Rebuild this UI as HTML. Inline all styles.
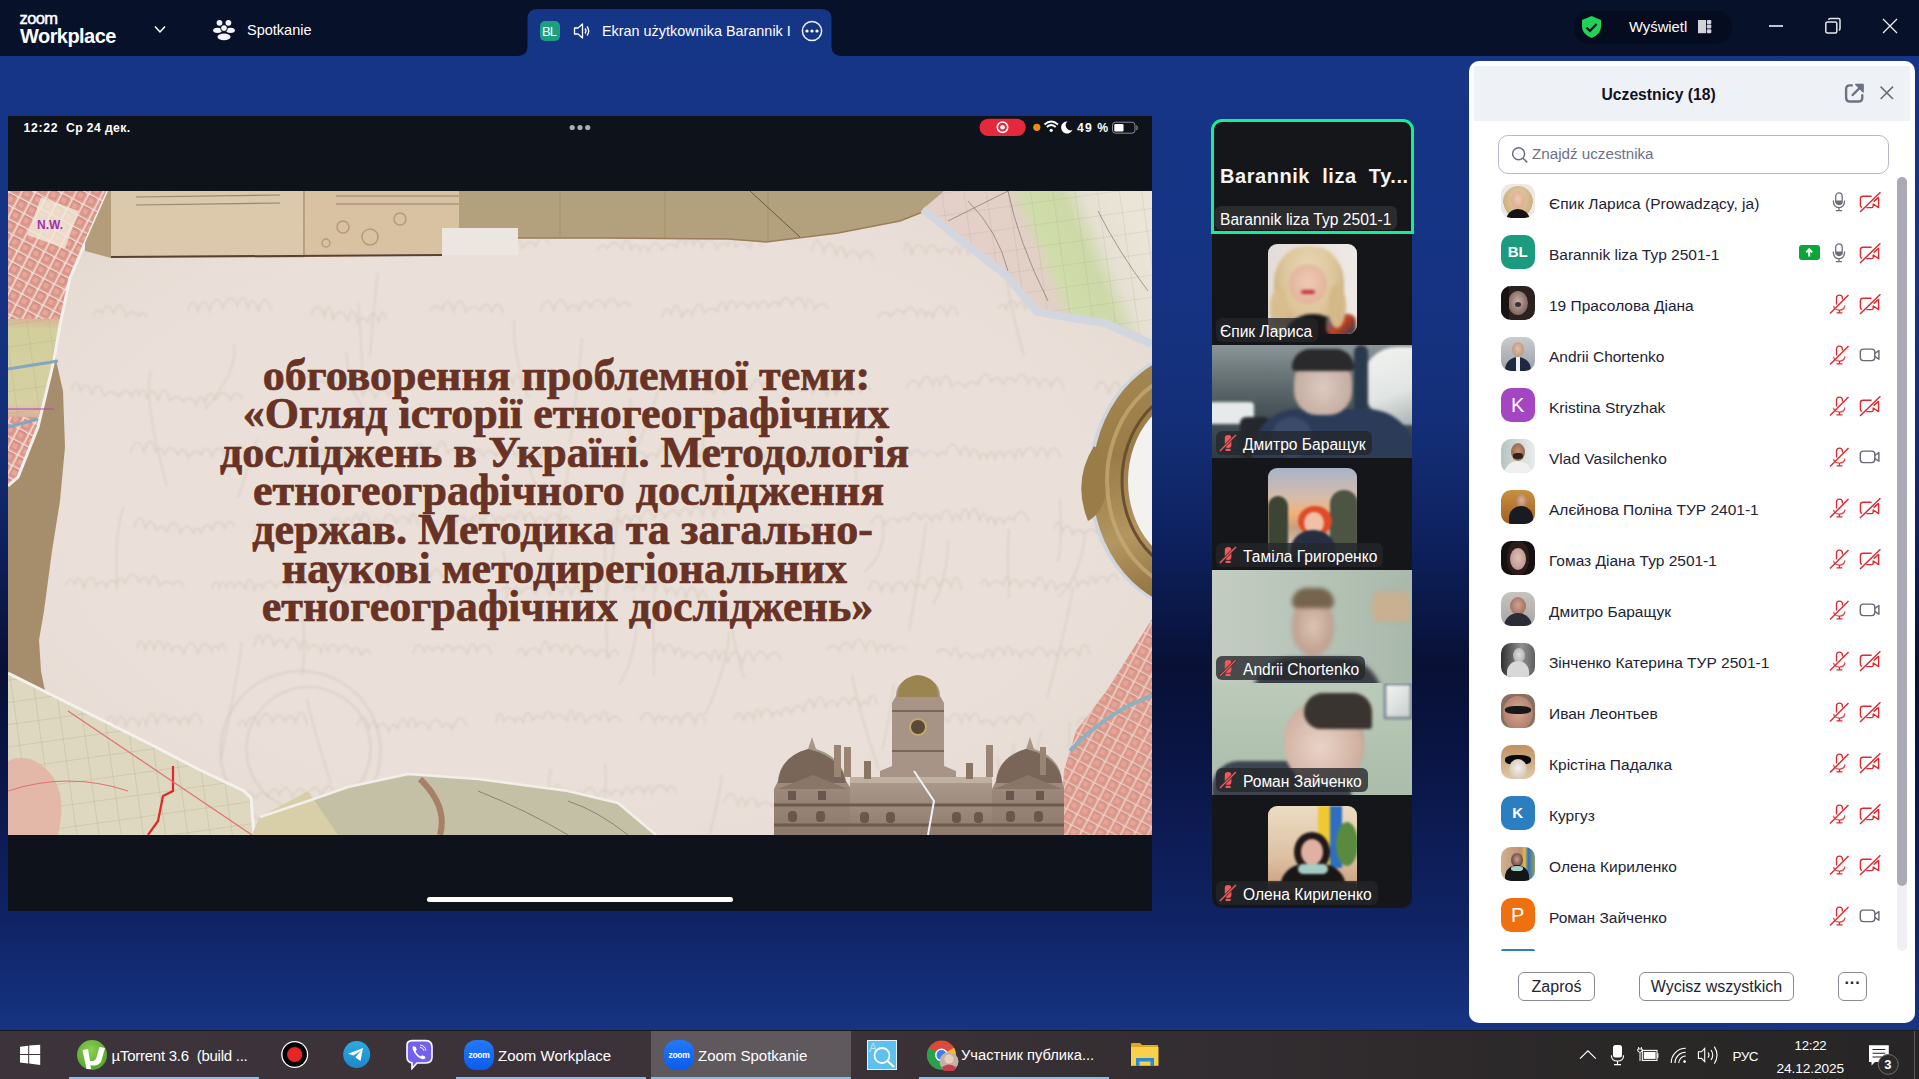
<!DOCTYPE html>
<html><head><meta charset="utf-8">
<style>
*{margin:0;padding:0;box-sizing:border-box}
html,body{width:1919px;height:1079px;overflow:hidden}
body{position:relative;font-family:"Liberation Sans",sans-serif;background:linear-gradient(180deg,#153587 56px,#153382 300px,#142f79 418px,#0e2260 534px,#081035 668px,#0a1545 758px,#0f2262 911px,#163482 1029px)}
.a{position:absolute}
.t{position:absolute;white-space:nowrap;line-height:1}
#top{left:0;top:0;width:1919px;height:56px;background:#07112a}
#screen{left:8px;top:116px;width:1144px;height:795px;background:#0e121b;overflow:hidden}
#strip{left:1212px;top:120px;width:200px;height:788px;background:#141619;border-radius:13px 13px 10px 10px;overflow:visible}
.tile{position:absolute;left:0;width:200px;overflow:hidden}
.lbl{position:absolute;left:4px;height:24px;border-radius:6px;background:rgba(36,38,42,.78);color:#fff;font-size:15.6px;line-height:28px;padding:0 6px;white-space:nowrap}
#panel{left:1469px;top:61px;width:446px;height:962px;background:#fff;border-radius:10px;overflow:hidden}
#phead{left:5px;top:5px;width:436px;height:55px;background:#eef1f5}
.row{position:absolute;left:32px;height:34px;width:380px}
.av{position:absolute;left:0;top:0;width:33.5px;height:33.5px;border-radius:10px;overflow:hidden}
.nm{position:absolute;left:48px;top:3px;line-height:34px;font-size:15.5px;color:#232333;white-space:nowrap}
.btn{position:absolute;top:911px;height:29px;border:1px solid #8a8a96;border-radius:6px;font-size:16px;line-height:27px;text-align:center;color:#232333}
#task{left:0;top:1030px;width:1919px;height:49px;background:linear-gradient(90deg,#3c343a 0%,#3a3237 45%,#322d30 65%,#2a2727 85%,#272525 100%)}
.tt{position:absolute;color:#fff;font-size:15px;white-space:nowrap;line-height:49px;top:0}
.ul{position:absolute;top:46px;height:3px;background:#84bdf0}
</style></head><body>

<!-- TOP BAR -->
<div id="top" class="a">
  <div class="t" style="left:19.5px;top:9.8px;font-size:16.5px;color:#fff;letter-spacing:-0.6px;-webkit-text-stroke:0.5px #fff">zoom</div>
  <div class="t" style="left:20px;top:26px;font-size:20px;font-weight:bold;color:#fff;letter-spacing:-0.55px">Workplace</div>
  <svg class="a" style="left:150px;top:22px" width="20" height="14" viewBox="0 0 20 14"><path d="M5 4.5 L10 10 L15 4.5" stroke="#fff" stroke-width="1.5" fill="none"/></svg>
  <svg class="a" style="left:210px;top:16px" width="30" height="28" viewBox="0 0 30 28">
    <g fill="#f4f5f8"><circle cx="9.5" cy="6.8" r="2.9"/><circle cx="18.4" cy="6.8" r="2.9"/>
    <ellipse cx="7.5" cy="14.3" rx="4.4" ry="2.6"/><ellipse cx="20.5" cy="14.3" rx="4.4" ry="2.6"/>
    <circle cx="14" cy="12.1" r="3.4" stroke="#07112a" stroke-width="1"/>
    <ellipse cx="14" cy="20.9" rx="6.5" ry="3.3"/></g></svg>
  <div class="t" style="left:247px;top:23.3px;font-size:14.5px;color:#fff">Spotkanie</div>
  <!-- tab -->
  <svg class="a" style="left:507px;top:0" width="345" height="56" viewBox="507 0 345 56"><path d="M517 56 Q527.5 56 527.5 45.5 L527.5 19 Q527.5 9 537.5 9 L821.5 9 Q831.5 9 831.5 19 L831.5 45.5 Q831.5 56 842 56 Z" fill="#153587"/></svg>
  <div class="a" style="left:540px;top:21px;width:19.5px;height:19.5px;background:#1c9f7f;border-radius:5px"></div>
  <div class="t" style="left:542px;top:24.5px;font-size:13px;color:#fff;letter-spacing:-0.8px">BL</div>
  <svg class="a" style="left:570px;top:20px" width="24" height="22" viewBox="0 0 24 22"><path d="M4.5 8 L8 8 L12.5 4 L12.5 18 L8 14 L4.5 14 Z" stroke="#fff" stroke-width="1.3" fill="none" stroke-linejoin="round"/><path d="M15 8.5 Q17 11 15 13.5" stroke="#fff" stroke-width="1.3" fill="none"/><path d="M17 6.5 Q20.5 11 17 15.5" stroke="#fff" stroke-width="1.3" fill="none"/></svg>
  <div class="t" style="left:602px;top:23.8px;font-size:14.4px;color:#fff">Ekran użytkownika Barannik I</div>
  <svg class="a" style="left:800px;top:19px" width="24" height="24" viewBox="0 0 24 24"><circle cx="12" cy="12" r="9.6" stroke="#f0f0f5" stroke-width="1.5" fill="none"/><circle cx="7" cy="12" r="1.6" fill="#fff"/><circle cx="12" cy="12" r="1.6" fill="#fff"/><circle cx="17" cy="12" r="1.6" fill="#fff"/></svg>
  <!-- right side -->
  <div class="a" style="left:1574px;top:11px;width:158px;height:33px;background:#050c1f;border-radius:15px"></div>
  <svg class="a" style="left:1580px;top:15px" width="24" height="24" viewBox="0 0 24 24"><path d="M11.7 1 L21 5 L21 12 Q21 19 11.7 23 Q2 19 2 12 L2 5 Z" fill="#22d158"/><path d="M6.5 12.5 L10 16 L16.5 9" stroke="#06102a" stroke-width="2.2" fill="none"/></svg>
  <div class="t" style="left:1629px;top:20px;font-size:14.8px;color:#fff">Wyświetl</div>
  <svg class="a" style="left:1697px;top:19px" width="16" height="16" viewBox="0 0 16 16"><rect x="1" y="1" width="8" height="13.2" fill="#d2d3da"/><rect x="9.8" y="1" width="4.5" height="4" rx="1" fill="#d2d3da"/><rect x="9.8" y="5.6" width="4.5" height="4" rx="1" fill="#d2d3da"/><rect x="9.8" y="10.2" width="4.5" height="4" rx="1" fill="#d2d3da"/></svg>
  <div class="a" style="left:1769px;top:25px;width:14px;height:2px;background:#c2c5cf"></div>
  <svg class="a" style="left:1822px;top:16px" width="22" height="20" viewBox="0 0 22 20"><rect x="3.8" y="5.9" width="11" height="11" rx="1.5" stroke="#e6e7ec" stroke-width="1.5" fill="#07112a"/><path d="M6.6 3.8 Q6.8 2.4 8.4 2.4 L16.6 2.4 Q18 2.4 18 4 L18 12.5 Q18 14 16.8 14.3" stroke="#e6e7ec" stroke-width="1.5" fill="none"/></svg>
  <svg class="a" style="left:1880px;top:16px" width="20" height="20" viewBox="0 0 20 20"><path d="M3 3 L17 17 M17 3 L3 17" stroke="#f0f0f4" stroke-width="1.3"/></svg>
</div>

<!-- SHARED SCREEN -->
<div id="screen" class="a">
  <div class="t" style="left:15.5px;top:5.5px;font-size:12.2px;font-weight:bold;color:#fff;letter-spacing:0.7px">12:22</div>
  <div class="t" style="left:58px;top:5.5px;font-size:12.2px;font-weight:bold;color:#fff;letter-spacing:0.4px">Ср 24 дек.</div>
  <svg class="a" style="left:560px;top:5px" width="30" height="14" viewBox="0 0 30 14"><circle cx="4.2" cy="6.5" r="2.6" fill="#a9adb6"/><circle cx="12" cy="6.5" r="2.6" fill="#a9adb6"/><circle cx="19.7" cy="6.5" r="2.6" fill="#a9adb6"/></svg>
  <svg class="a" style="left:965px;top:0" width="180" height="24" viewBox="973 116 180 24">
    <rect x="979.5" y="118.7" width="46.3" height="17.2" rx="8.6" fill="#e5283b"/>
    <circle cx="1002.5" cy="127.2" r="5.2" stroke="#fff" stroke-width="1.6" fill="none"/><circle cx="1002.5" cy="127.2" r="2.3" fill="#fff"/>
    <circle cx="1036.8" cy="127.3" r="3.6" fill="#f08a0c"/>
    <path d="M1044.5 124.5 Q1051.2 118.5 1058 124.5" stroke="#fff" stroke-width="1.7" fill="none"/><path d="M1046.8 127 Q1051.2 123 1055.7 127" stroke="#fff" stroke-width="1.7" fill="none"/><circle cx="1051.2" cy="130.3" r="1.6" fill="#fff"/>
    <path d="M1067.5 121.5 A6 6 0 1 0 1072.5 130 A5 5 0 0 1 1067.5 121.5 Z" fill="#fff"/>
    <text x="1077" y="131.7" font-family="Liberation Sans" font-weight="bold" font-size="12.2" fill="#fff" letter-spacing="1.1">49 %</text>
    <rect x="1112.5" y="122.2" width="22.5" height="11" rx="3" stroke="#8d8f96" stroke-width="1" fill="none"/>
    <rect x="1114.3" y="124" width="9.2" height="7.4" rx="1" fill="#fff"/>
    <path d="M1136.5 125.5 Q1138 127.7 1136.5 130" stroke="#8d8f96" stroke-width="1.2" fill="none"/>
  </svg>
  <!-- SLIDE -->
  <div class="a" style="left:0;top:75px;width:1144px;height:644px;overflow:hidden;background:#eae0d9" id="slide">
<svg class="a" style="left:0;top:0" width="1144" height="644" viewBox="0 0 1144 644">
  <defs>
    <clipPath id="tlclip"><rect x="0" y="0" width="120" height="128"/><rect x="0" y="226" width="120" height="80"/></clipPath><clipPath id="tlclip2"><rect x="0" y="128" width="120" height="98"/></clipPath>
    <filter id="soft" x="-5%" y="-5%" width="110%" height="110%"><feGaussianBlur stdDeviation="0.9"/></filter>
    <linearGradient id="mapTL" x1="0" y1="0" x2="0" y2="1">
      <stop offset="0" stop-color="#e0a89c"/><stop offset="0.41" stop-color="#dea69a"/><stop offset="0.47" stop-color="#d2cf9c"/><stop offset="0.72" stop-color="#d5d0a2"/><stop offset="0.78" stop-color="#e0a59a"/><stop offset="1" stop-color="#e2aca0"/>
    </linearGradient>
    <linearGradient id="mapTR" gradientUnits="userSpaceOnUse" x1="990" y1="95" x2="1130" y2="35"><stop offset="0" stop-color="#e4d0c8"/><stop offset="0.3" stop-color="#e2d0c6"/><stop offset="0.4" stop-color="#cfddaa"/><stop offset="0.62" stop-color="#cdd9a8"/><stop offset="0.75" stop-color="#e6e0d2"/><stop offset="1" stop-color="#ebe5d8"/></linearGradient>
    <pattern id="grid" width="22" height="22" patternUnits="userSpaceOnUse" patternTransform="rotate(-8)">
      <path d="M0 0 L22 0 M0 0 L0 22" stroke="#9a9070" stroke-width="0.6" fill="none"/>
    </pattern>
    <pattern id="streets" width="12" height="12" patternUnits="userSpaceOnUse" patternTransform="rotate(28)">
      <rect x="1.5" y="1.5" width="9" height="9" fill="#d98a7e"/>
      <rect x="3.5" y="3.5" width="5" height="5" fill="#e8a89c"/>
      <path d="M0 0.7 L12 0.7 M0.7 0 L0.7 12" stroke="#f6ece6" stroke-width="1.4"/>
      <path d="M1.5 1.5 L10.5 1.5" stroke="#9a4a44" stroke-width="0.5"/>
    </pattern>
    <pattern id="hand" width="260" height="58" patternUnits="userSpaceOnUse" patternTransform="rotate(-3)">
      <path d="M4 30 q8 -14 14 -2 t12 0 q6 -16 10 2 t14 -4 q10 -12 12 4 t16 -2 q4 -18 10 0 t12 2 M120 32 q8 -12 12 0 t14 -2 q6 -14 12 2 t16 0 q8 -10 12 2 M190 30 q6 -16 12 0 t12 -2 q8 -12 14 2 t16 -4" stroke="#d4c9c2" stroke-width="1" fill="none" opacity="0.55"/>
    </pattern>
    <linearGradient id="goldlin" x1="0" y1="0" x2="0.3" y2="1"><stop offset="0" stop-color="#a88a52"/><stop offset="0.4" stop-color="#9a7c48"/><stop offset="0.7" stop-color="#b49660"/><stop offset="1" stop-color="#8a6c3c"/></linearGradient>
    <radialGradient id="gold" cx="0.5" cy="0.5" r="0.5">
      <stop offset="0.62" stop-color="#f5f3f1"/><stop offset="0.65" stop-color="#7a5a2c"/><stop offset="0.72" stop-color="#b09050"/><stop offset="0.8" stop-color="#8a6a38"/><stop offset="0.88" stop-color="#c2a468"/><stop offset="0.95" stop-color="#6e5228"/><stop offset="1" stop-color="#a08048"/>
    </radialGradient>
    <linearGradient id="bldg" x1="0" y1="0" x2="0" y2="1">
      <stop offset="0" stop-color="#ab998c"/><stop offset="1" stop-color="#8e7a6c"/>
    </linearGradient>
    <radialGradient id="vign" cx="0.5" cy="0.5" r="0.7">
      <stop offset="0.55" stop-color="#ede4df" stop-opacity="0"/><stop offset="1" stop-color="#c8b8a8" stop-opacity="0.35"/>
    </radialGradient>
  </defs>
  <rect x="0" y="0" width="1144" height="644" fill="url(#vign)"/>
  <!-- handwriting texture -->
  <g filter="url(#soft)" stroke="#d6cabf" stroke-width="1.5" fill="none" opacity="0.75"><path d="M96 59 q5.5 -16.2 11.1 -1.9 q5.5 -16.8 11.1 1.8 q3.9 -12.2 7.8 -2.5 q6.7 -17.7 13.5 -2.7 q7.4 -21.5 14.9 0.9 q6.0 -10.2 11.9 -2.9 q5.6 -8.8 11.2 -1.9 q4.5 -8.4 8.9 -0.2 q5.3 -19.8 10.5 0.1 q6.1 -15.0 12.1 1.0 q5.3 -11.9 10.7 3.0 q7.5 -19.8 15.0 1.2 q4.8 -11.2 9.5 -1.3 q3.8 -18.7 7.6 -0.6 q6.9 -13.4 13.8 2.7"/><path d="M311 56 q7.1 -14.6 14.3 2.9 q5.1 -9.0 10.2 0.8 q6.6 -11.8 13.2 -2.5 q4.8 -21.5 9.7 1.5 q4.0 -11.4 7.9 -2.4"/><path d="M386 56 q5.7 -14.3 11.5 -1.9 q6.4 -9.8 12.9 0.9 q4.0 -13.9 7.9 -1.7 q4.6 -21.6 9.2 1.8 q4.7 -20.4 9.4 -1.7 q5.1 -20.0 10.2 0.9 q3.9 -21.9 7.8 -1.7 q4.5 -18.8 9.1 -1.0 q4.7 -9.0 9.4 -2.5 q5.8 -11.4 11.7 0.6 q5.0 -14.3 10.0 2.8 q5.4 -16.0 10.9 2.2 q4.2 -10.2 8.5 2.5 q6.8 -11.5 13.5 -1.9 q6.5 -21.2 12.9 -1.8"/><path d="M589 60 q5.2 -9.5 10.4 -2.8 q7.4 -11.3 14.7 1.2 q4.5 -19.5 9.1 0.6 q4.7 -10.5 9.3 1.3 q3.8 -11.2 7.6 0.4 q6.9 -16.6 13.8 -1.3 q7.2 -10.9 14.3 -2.9 q4.6 -14.2 9.2 -2.6 q4.2 -13.2 8.4 0.4 q4.0 -13.1 8.1 2.3 q7.4 -17.2 14.8 1.1 q5.8 -10.0 11.7 -2.8 q3.6 -20.7 7.1 1.2 q7.4 -8.3 14.7 0.8 q5.4 -18.2 10.9 -1.1"/><path d="M803 60 q6.4 -20.6 12.9 1.4 q6.3 -19.1 12.6 2.5 q4.9 -17.6 9.8 2.4 q7.0 -13.8 14.0 1.7 q7.0 -16.0 13.9 0.7"/><path d="M896 60 q3.8 -17.0 7.6 3.0 q7.0 -18.2 14.0 -0.7 q6.4 -16.1 12.9 -0.4 q6.9 -9.2 13.7 1.5 q3.6 -16.4 7.2 -0.1 q4.4 -17.8 8.8 -0.0 q6.0 -20.9 11.9 -1.5 q3.5 -12.2 7.1 1.1 q4.3 -10.4 8.6 2.4 q6.1 -14.2 12.3 2.4 q4.8 -17.3 9.6 -1.8 q5.2 -19.3 10.4 2.5"/><path d="M1067 60 q4.8 -9.9 9.5 -0.0 q6.8 -19.9 13.7 1.3 q7.3 -11.9 14.6 -2.0 q5.3 -11.9 10.6 -1.7 q5.2 -16.8 10.3 -0.0 q4.8 -19.7 9.5 2.9 q5.3 -9.0 10.6 -2.8 q7.0 -8.6 14.0 1.3 q5.8 -12.3 11.6 1.7"/><path d="M85 125 q4.4 -10.0 8.9 -2.7 q6.0 -14.3 12.0 0.8 q6.1 -19.3 12.2 2.8 q6.2 -10.8 12.5 -0.1 q4.2 -8.2 8.4 -0.2"/><path d="M180 120 q4.9 -17.8 9.8 0.1 q6.0 -18.6 11.9 -0.6 q6.7 -20.7 13.3 -2.5 q7.2 -18.1 14.5 -2.2 q5.3 -16.8 10.6 2.5 q5.0 -16.0 10.0 2.3 q6.7 -21.2 13.4 -0.2"/><path d="M303 124 q6.8 -17.0 13.5 1.3 q4.4 -20.6 8.7 2.9 q7.4 -15.5 14.8 1.7 q4.8 -20.7 9.6 2.1 q4.9 -9.2 9.8 -0.4 q5.7 -18.8 11.4 -0.1 q3.6 -19.3 7.2 -2.6"/><path d="M421 121 q6.7 -10.0 13.3 -2.1 q5.6 -18.1 11.1 2.0 q6.3 -21.2 12.5 -0.0 q7.3 -9.2 14.6 -1.7 q5.6 -12.1 11.2 1.4 q6.1 -15.3 12.1 2.1"/><path d="M532 121 q6.9 -20.6 13.8 -1.8 q6.9 -21.6 13.8 0.1 q5.8 -10.8 11.6 0.2 q5.5 -16.5 11.0 -2.8 q7.4 -15.2 14.8 -0.6 q6.7 -15.9 13.4 -0.1 q6.3 -8.9 12.5 0.2"/><path d="M654 126 q4.6 -14.6 9.2 -2.2 q5.2 -19.4 10.5 2.4 q5.4 -12.4 10.8 -1.9 q6.0 -21.0 11.9 -2.2 q6.6 -8.3 13.2 -1.8 q4.4 -17.6 8.8 -1.1 q4.9 -16.7 9.8 -2.4 q6.4 -9.7 12.8 0.1 q4.5 -10.8 9.0 0.2 q5.2 -13.3 10.5 -0.5 q5.6 -10.2 11.2 -1.8 q6.0 -16.9 12.1 0.2 q6.9 -16.6 13.8 2.1 q4.4 -18.4 8.9 1.9 q7.1 -12.4 14.2 -1.1"/><path d="M869 127 q7.1 -9.9 14.1 -1.6 q6.4 -11.6 12.8 -2.4 q6.8 -13.9 13.7 1.7 q4.0 -13.6 8.0 1.1 q3.6 -10.8 7.1 1.1 q7.1 -21.6 14.3 -2.3 q5.5 -18.6 11.0 0.0"/><path d="M990 118 q3.9 -8.5 7.8 0.3 q5.6 -16.0 11.1 -2.1 q4.2 -10.9 8.5 2.0 q7.5 -21.0 14.9 -2.4 q3.7 -21.3 7.5 -0.2 q6.6 -12.6 13.1 -0.2 q5.6 -14.0 11.1 0.6"/><path d="M1082 126 q4.2 -14.4 8.5 1.4 q5.1 -10.7 10.2 -2.0 q5.6 -8.2 11.1 2.4 q6.7 -17.9 13.4 2.2 q6.0 -13.7 12.0 0.6 q5.5 -21.8 11.0 1.8 q4.5 -20.8 9.1 1.5 q6.6 -19.4 13.2 -0.6 q7.1 -20.3 14.2 1.2 q6.6 -18.7 13.1 -0.6 q6.4 -9.0 12.8 -0.9 q5.4 -8.1 10.8 -0.9"/><path d="M63 200 q4.9 -17.2 9.7 0.4 q5.6 -13.5 11.3 3.0 q6.1 -17.8 12.1 1.6 q7.4 -8.3 14.8 0.7 q6.5 -11.6 12.9 -0.6 q3.7 -10.7 7.4 -0.7 q3.9 -11.5 7.8 2.4 q5.7 -15.1 11.4 2.8 q5.8 -21.9 11.5 0.8 q6.7 -9.1 13.5 0.6 q6.5 -8.6 13.1 2.6 q4.1 -14.6 8.3 -2.0 q5.5 -16.6 11.0 -2.6 q7.3 -13.9 14.6 0.2 q5.9 -13.1 11.8 -1.3"/><path d="M273 196 q6.4 -12.1 12.7 -2.9 q4.5 -8.6 9.0 -2.1 q6.5 -13.5 13.0 2.4 q6.5 -8.7 13.0 2.9 q7.3 -9.0 14.6 2.4 q5.2 -14.7 10.4 2.8 q4.5 -15.3 8.9 2.6 q6.4 -14.6 12.8 2.9 q6.8 -16.5 13.5 -2.3 q6.0 -14.4 12.0 -1.8"/><path d="M413 194 q5.3 -17.4 10.5 -0.3 q4.5 -16.2 9.1 -0.5 q6.6 -15.4 13.2 3.0 q7.3 -18.3 14.6 -1.6 q4.0 -20.5 7.9 1.7 q6.0 -13.0 12.0 -1.4 q6.2 -15.9 12.5 0.6 q6.0 -18.5 12.1 -1.9 q4.5 -21.7 9.0 2.5 q7.0 -8.6 14.0 -2.6"/><path d="M555 199 q3.9 -15.6 7.8 -2.6 q3.8 -17.5 7.7 0.3 q6.0 -13.2 12.0 -0.1 q4.3 -12.8 8.7 1.5 q6.9 -9.0 13.7 -2.3 q6.7 -16.7 13.5 1.6 q4.4 -13.9 8.7 -1.5 q6.7 -13.2 13.5 0.9 q7.5 -12.6 14.9 0.3 q6.5 -20.9 13.0 -0.4"/><path d="M698 202 q3.8 -9.2 7.6 0.4 q5.4 -17.6 10.9 -1.2 q6.6 -9.1 13.2 -1.7 q6.1 -9.1 12.3 -1.2 q6.4 -17.7 12.8 -1.3 q4.1 -13.0 8.1 1.4"/><path d="M793 200 q5.8 -20.9 11.6 2.6 q7.2 -14.1 14.3 1.8 q4.7 -12.4 9.4 -0.6 q7.2 -20.5 14.5 -1.5 q4.9 -13.1 9.9 -0.8 q5.1 -13.4 10.2 -1.8"/><path d="M898 198 q6.8 -15.9 13.7 -1.9 q6.5 -20.3 13.1 -1.3 q3.6 -15.2 7.2 0.3 q5.8 -21.5 11.5 0.9 q6.7 -8.9 13.4 0.3 q6.7 -9.2 13.3 -2.5 q6.4 -20.6 12.9 -2.5 q6.0 -10.0 12.1 1.5 q6.1 -11.4 12.2 -1.7 q6.6 -15.3 13.1 1.6 q5.1 -12.7 10.2 2.8 q6.2 -14.9 12.4 0.2 q6.4 -17.9 12.8 2.5"/><path d="M1087 200 q6.9 -19.3 13.8 2.0 q7.1 -21.4 14.1 0.8 q5.6 -17.9 11.2 1.8 q5.2 -13.9 10.4 -2.1 q6.5 -21.9 12.9 -0.7 q4.2 -10.9 8.3 -0.5 q4.7 -21.6 9.3 -2.6 q4.7 -9.6 9.5 0.9 q6.6 -10.5 13.2 -2.6 q5.3 -16.2 10.7 2.5 q3.6 -9.5 7.3 -1.9 q4.4 -11.3 8.7 1.3 q5.9 -11.1 11.8 -1.9 q4.6 -10.4 9.2 1.5"/><path d="M122 262 q7.0 -20.8 14.1 -0.9 q5.7 -21.4 11.4 -0.1 q4.4 -8.7 8.8 2.7 q6.7 -13.4 13.4 0.2 q5.6 -11.8 11.1 2.9 q6.1 -11.3 12.3 -2.9 q5.4 -13.2 10.8 1.8 q6.4 -16.5 12.7 -2.1 q4.1 -12.5 8.3 -1.4 q7.0 -15.2 14.0 0.8"/><path d="M288 265 q4.1 -18.8 8.2 -3.0 q6.8 -19.8 13.6 1.9 q3.8 -11.8 7.7 1.3 q3.9 -14.7 7.8 -0.2 q7.3 -16.2 14.6 2.1 q4.7 -19.1 9.4 -0.5 q7.2 -9.3 14.3 2.0 q4.3 -15.6 8.7 0.2"/><path d="M396 263 q4.7 -9.1 9.5 -1.2 q5.4 -18.0 10.7 -0.8 q6.2 -9.5 12.5 -0.6 q5.3 -21.5 10.7 2.0 q6.1 -8.2 12.2 -0.7 q6.3 -11.3 12.7 0.4 q5.3 -8.1 10.7 2.9 q6.7 -10.9 13.4 0.7 q4.7 -13.3 9.3 0.2 q4.7 -12.7 9.4 -0.6 q6.2 -11.6 12.3 -1.8 q6.4 -12.6 12.9 2.7 q5.8 -18.1 11.5 -1.0 q6.8 -9.3 13.6 -2.2"/><path d="M578 267 q4.2 -13.6 8.4 2.0 q5.9 -9.3 11.7 -1.6 q4.1 -9.7 8.3 -0.6 q3.8 -20.9 7.6 -0.4 q5.5 -17.1 11.1 1.6 q6.8 -13.4 13.6 -1.0 q5.1 -8.2 10.3 -0.6 q6.3 -21.7 12.6 1.7 q6.1 -16.5 12.3 -2.9 q4.8 -12.8 9.6 0.9 q3.9 -13.3 7.9 0.1 q6.7 -19.6 13.3 0.7 q4.1 -18.7 8.3 2.4"/><path d="M748 265 q4.1 -18.0 8.1 2.9 q5.6 -18.0 11.1 2.0 q4.3 -21.2 8.6 0.8 q4.3 -9.2 8.6 -1.5 q5.8 -17.8 11.6 -1.0 q7.2 -13.1 14.4 -0.2 q4.0 -21.6 8.0 -2.2 q7.1 -15.6 14.2 0.4 q5.7 -11.7 11.5 2.5"/><path d="M894 266 q4.0 -19.5 8.0 -1.3 q7.1 -11.4 14.2 0.4 q6.8 -10.6 13.6 0.3 q3.8 -8.4 7.6 -1.9 q7.4 -21.2 14.9 1.0 q4.7 -17.4 9.5 1.4 q5.0 -16.3 10.1 1.8 q3.6 -10.8 7.1 -0.2 q4.1 -13.4 8.1 0.4 q4.2 -15.3 8.4 -1.4 q5.8 -12.6 11.5 0.9 q3.7 -17.4 7.3 -2.1 q7.3 -16.4 14.7 -0.2 q5.1 -16.7 10.3 1.1 q6.5 -18.5 13.1 -0.1"/><path d="M126 337 q5.8 -20.7 11.5 0.2 q5.6 -14.1 11.2 2.4 q4.8 -8.8 9.6 1.4 q7.1 -18.2 14.2 0.6 q6.5 -12.3 13.0 0.6 q3.8 -9.7 7.6 -0.3 q5.5 -13.6 11.0 -2.7 q6.3 -15.4 12.6 -1.6 q4.7 -13.5 9.5 -1.6"/><path d="M246 342 q6.2 -20.1 12.3 -0.5 q6.7 -11.1 13.4 1.5 q5.8 -20.6 11.5 -2.4 q6.7 -9.7 13.3 0.2 q7.3 -8.0 14.6 -1.5 q4.7 -12.5 9.4 -2.6 q7.1 -19.4 14.2 -0.6 q4.9 -16.2 9.9 -2.7 q3.6 -20.6 7.2 -1.2 q5.5 -21.1 11.0 2.9 q5.4 -10.9 10.8 -1.2 q7.2 -20.6 14.4 -1.8 q6.9 -13.0 13.7 -0.2 q4.2 -20.3 8.4 3.0"/><path d="M434 334 q7.0 -8.7 14.0 -2.4 q6.4 -12.4 12.8 2.4 q7.0 -18.0 14.0 -2.2 q6.3 -21.1 12.6 -0.3 q3.8 -11.1 7.6 -1.2 q6.3 -10.8 12.7 -1.9 q4.4 -17.3 8.9 1.7 q5.0 -17.3 10.0 2.3 q5.9 -11.2 11.7 -1.2 q7.2 -17.3 14.4 -1.3 q6.1 -9.3 12.1 2.9"/><path d="M597 338 q3.7 -16.4 7.4 -1.3 q4.5 -19.2 9.0 -2.5 q4.6 -18.6 9.3 -1.5 q4.6 -15.7 9.2 -1.9 q7.1 -21.8 14.2 -2.8 q5.3 -18.5 10.7 -0.7 q7.2 -15.0 14.4 -1.9 q5.7 -17.0 11.4 -0.8 q6.1 -19.0 12.3 0.1 q5.5 -19.8 11.0 1.1 q5.6 -21.3 11.2 -2.0"/><path d="M760 338 q4.4 -14.2 8.9 1.6 q6.6 -19.1 13.3 -1.6 q5.5 -11.1 10.9 0.5 q5.5 -8.5 11.0 0.6 q6.4 -16.0 12.7 2.2 q4.2 -10.1 8.4 -2.9 q5.5 -14.1 11.0 -0.3"/><path d="M863 333 q7.1 -16.0 14.3 0.3 q6.7 -11.3 13.3 -2.1 q4.7 -8.6 9.5 -1.1 q6.0 -15.4 12.0 -1.4 q5.9 -9.2 11.7 1.9 q4.2 -11.6 8.4 -2.0 q6.3 -19.6 12.5 1.7 q3.7 -13.7 7.5 -0.8 q4.4 -21.6 8.7 -2.7 q5.5 -18.7 10.9 2.9 q4.1 -14.4 8.2 1.5 q3.7 -11.4 7.3 2.3 q4.1 -13.5 8.1 -1.2 q5.2 -9.1 10.4 -2.8 q7.5 -18.7 15.0 1.4"/><path d="M1046 338 q4.5 -14.5 8.9 2.6 q5.0 -12.7 9.9 2.9 q5.9 -8.6 11.9 -0.6 q6.1 -8.8 12.2 -0.9 q6.3 -20.1 12.6 0.5 q7.0 -14.5 14.1 -0.6 q6.9 -13.3 13.7 1.7"/><path d="M58 394 q4.3 -11.0 8.6 -0.2 q4.7 -14.3 9.5 3.0 q6.2 -20.1 12.4 -1.8 q5.0 -9.0 10.1 1.1 q5.0 -11.8 9.9 -2.9 q4.2 -11.7 8.5 -0.6 q7.2 -18.0 14.4 -1.4 q4.9 -10.1 9.9 2.6 q4.9 -18.7 9.9 1.3 q7.1 -8.3 14.3 -1.1 q5.0 -9.2 10.1 2.3"/><path d="M204 398 q3.7 -13.5 7.4 -1.6 q3.7 -10.1 7.3 0.6 q3.6 -12.4 7.3 -0.5 q5.7 -9.9 11.4 1.2 q4.5 -18.2 9.1 1.0 q4.1 -10.9 8.2 -1.3 q6.4 -13.7 12.7 -0.7 q7.0 -11.2 13.9 -1.2 q4.9 -11.0 9.8 -2.8 q3.6 -16.8 7.2 0.4 q6.7 -21.7 13.5 -1.2 q6.2 -20.9 12.4 -1.7 q6.3 -17.3 12.5 2.7 q7.0 -11.3 13.9 0.8"/><path d="M372 396 q3.7 -13.4 7.5 -1.0 q5.5 -11.9 11.0 -2.0 q5.1 -14.7 10.2 -2.0 q6.2 -11.4 12.3 -2.4 q4.9 -13.9 9.7 -2.1 q5.8 -17.8 11.7 0.3 q6.3 -8.3 12.6 -0.7 q5.0 -8.9 9.9 -0.6 q3.7 -14.9 7.4 0.5 q5.4 -12.6 10.8 -1.5"/><path d="M493 401 q5.8 -11.7 11.5 1.0 q4.2 -14.6 8.5 0.7 q7.3 -13.1 14.6 0.5 q7.3 -18.8 14.5 0.8 q6.0 -13.8 12.0 -0.5 q4.6 -19.6 9.2 2.3 q5.0 -20.7 10.1 -2.8 q4.0 -15.1 8.1 -1.1 q4.9 -21.7 9.9 -2.1"/><path d="M616 399 q4.4 -8.0 8.9 0.3 q5.1 -11.4 10.2 -0.0 q6.1 -15.7 12.2 0.7 q5.7 -19.6 11.5 2.8 q4.8 -12.9 9.7 2.3 q4.8 -18.0 9.5 1.2 q6.2 -21.5 12.5 1.9 q4.1 -16.7 8.3 -0.1"/><path d="M735 395 q6.5 -15.5 13.0 -1.6 q4.5 -12.5 9.0 -1.9 q5.6 -9.8 11.1 -2.6 q3.8 -9.4 7.5 1.2 q4.0 -14.3 7.9 1.6 q5.4 -10.3 10.8 2.2 q7.0 -8.7 14.0 -1.5 q5.5 -19.2 11.1 -0.6 q6.4 -11.5 12.7 1.3"/><path d="M860 400 q6.9 -19.6 13.7 0.4 q5.2 -17.9 10.4 0.7 q6.8 -19.2 13.6 -2.2 q5.0 -17.4 10.0 -1.6 q4.2 -8.2 8.5 0.5 q7.3 -21.6 14.5 -2.2 q6.3 -13.9 12.5 0.8 q5.1 -21.1 10.2 2.9"/><path d="M973 394 q3.7 -12.0 7.3 1.4 q7.5 -9.7 14.9 -1.0 q3.6 -15.6 7.2 -0.1 q5.0 -12.3 10.0 1.8 q6.9 -12.0 13.7 -0.6 q6.0 -18.7 11.9 2.9 q5.1 -17.7 10.1 0.3 q6.7 -10.1 13.4 -1.9 q3.9 -21.1 7.9 -1.5 q5.5 -9.7 10.9 -1.1 q3.6 -15.9 7.2 -2.1 q6.0 -11.8 12.0 -1.6 q5.4 -13.1 10.9 -1.4"/><path d="M129 457 q4.2 -14.8 8.5 3.0 q4.3 -20.1 8.6 -0.1 q5.2 -19.3 10.3 -0.6 q3.7 -15.7 7.5 0.9 q6.0 -11.9 12.0 2.6 q7.0 -21.9 13.9 -0.3 q6.8 -18.1 13.7 -1.9 q3.6 -10.4 7.2 -2.3 q3.8 -13.0 7.6 1.5"/><path d="M246 456 q4.3 -21.4 8.7 -2.9 q5.6 -19.3 11.2 1.8 q6.4 -13.6 12.9 1.8 q6.8 -18.7 13.6 2.9 q3.9 -21.3 7.8 -0.6 q6.3 -11.5 12.6 2.5 q3.6 -16.1 7.2 -1.6 q5.1 -13.2 10.1 0.9 q6.7 -13.1 13.5 0.8 q4.9 -11.9 9.8 2.4 q4.8 -9.3 9.6 -1.0"/><path d="M405 463 q5.7 -17.5 11.4 -1.9 q3.9 -10.0 7.8 -0.9 q5.2 -8.1 10.4 0.0 q5.1 -12.5 10.2 0.2 q7.3 -10.9 14.6 2.3 q4.8 -18.6 9.6 -2.3 q7.5 -14.0 14.9 2.8"/><path d="M509 463 q4.2 -11.8 8.4 1.1 q7.3 -12.5 14.6 -1.9 q4.9 -21.9 9.9 -2.1 q6.0 -13.3 12.1 0.9 q4.3 -16.6 8.7 2.3 q6.9 -16.8 13.9 0.0 q5.8 -9.6 11.5 2.0 q6.3 -14.3 12.5 1.0 q5.2 -13.4 10.4 -1.6"/><path d="M648 461 q3.6 -16.8 7.3 -0.3 q5.9 -16.3 11.7 2.6 q4.1 -14.6 8.2 3.0 q6.5 -12.4 12.9 1.4 q7.5 -13.6 14.9 2.2 q4.0 -21.9 8.0 -0.1 q4.4 -19.8 8.9 0.9 q7.3 -19.6 14.5 1.8 q5.5 -21.9 11.1 -2.6 q7.0 -18.0 14.0 -1.5 q6.7 -14.4 13.5 0.2"/><path d="M819 459 q6.1 -9.0 12.1 0.3 q6.6 -14.9 13.3 -1.5 q6.7 -20.0 13.4 1.6 q5.7 -20.7 11.4 1.8 q4.1 -13.1 8.2 -2.4 q3.6 -12.8 7.3 2.2 q6.8 -9.6 13.7 -1.9"/><path d="M929 462 q7.1 -9.0 14.2 2.9 q4.3 -16.8 8.7 2.3 q6.4 -10.8 12.8 1.0 q5.2 -8.2 10.4 -1.0 q4.8 -16.8 9.5 -1.3 q5.9 -17.7 11.8 -1.9 q4.0 -17.7 8.0 -0.2 q4.0 -9.6 8.0 2.6 q5.9 -13.0 11.9 -1.8 q7.5 -17.7 15.0 1.4 q4.9 -12.3 9.9 -0.6 q4.1 -16.8 8.2 -0.5 q6.8 -13.7 13.6 -0.3 q5.5 -21.2 11.1 -0.9"/><path d="M98 535 q4.6 -20.0 9.3 1.1 q5.3 -21.1 10.6 -0.7 q6.5 -16.4 12.9 -0.3 q3.8 -13.9 7.5 -1.3 q5.3 -21.4 10.5 -1.2 q6.3 -17.4 12.6 -1.5 q5.1 -9.9 10.3 2.4 q4.5 -13.9 9.0 -1.0 q6.8 -19.9 13.6 0.5"/><path d="M230 536 q3.9 -13.1 7.7 -0.8 q6.4 -17.4 12.8 -0.9 q7.1 -21.3 14.2 -2.9 q6.0 -14.6 12.1 -0.8 q5.4 -12.4 10.7 1.0 q5.9 -21.6 11.8 2.9"/><path d="M349 535 q6.1 -17.8 12.2 3.0 q3.8 -14.5 7.5 -0.6 q6.1 -11.1 12.2 2.9 q4.3 -13.2 8.7 -2.1 q5.1 -18.4 10.2 -2.5 q4.2 -17.1 8.3 0.7 q6.5 -11.5 12.9 1.9 q6.4 -18.9 12.8 -2.3 q5.4 -8.2 10.7 2.2 q7.3 -20.5 14.6 -2.9"/><path d="M488 532 q3.9 -19.0 7.9 -1.2 q5.5 -9.7 11.1 0.4 q4.0 -9.2 8.0 0.1 q4.7 -18.9 9.4 -1.5 q5.2 -8.8 10.3 -1.7 q5.3 -15.8 10.6 -0.2 q6.9 -9.5 13.8 2.1 q4.1 -21.6 8.2 0.1 q5.1 -16.6 10.3 2.2 q7.4 -13.8 14.7 -2.9 q4.1 -19.5 8.2 1.4 q6.4 -10.2 12.7 0.2"/><path d="M632 530 q7.4 -17.0 14.7 2.1 q3.7 -13.8 7.4 -2.5 q4.5 -9.6 9.1 2.5 q4.8 -14.8 9.6 0.9 q7.0 -21.3 14.1 0.4 q5.5 -20.7 11.0 -0.6"/><path d="M726 529 q5.0 -14.0 9.9 -0.1 q4.9 -14.0 9.9 -0.3 q3.7 -19.7 7.4 -2.6 q5.6 -15.7 11.2 -0.6 q4.4 -9.4 8.8 -0.8 q4.8 -14.8 9.5 -1.6 q6.5 -14.8 13.0 -2.9 q5.1 -21.5 10.3 -3.0 q5.9 -21.5 11.7 -0.8 q5.9 -13.2 11.8 -1.2 q5.9 -16.3 11.9 -1.1 q5.5 -15.2 11.0 1.5 q3.7 -9.3 7.4 -1.5 q4.6 -19.1 9.2 -0.4"/><path d="M914 530 q6.2 -9.2 12.4 2.9 q6.8 -12.6 13.7 -1.1 q6.8 -19.0 13.6 0.9 q3.7 -18.7 7.5 -2.7 q6.0 -15.7 12.0 2.6 q6.1 -8.3 12.1 2.6 q6.5 -16.1 13.0 -3.0 q6.4 -13.9 12.9 1.1 q7.4 -20.8 14.9 -2.6"/><path d="M1069 534 q5.0 -14.3 10.0 -0.4 q4.0 -12.5 7.9 1.4 q3.8 -9.6 7.6 2.0 q6.2 -15.7 12.3 -2.3 q4.0 -12.3 7.9 2.7 q5.7 -20.9 11.5 -1.7 q5.2 -15.5 10.3 2.0 q4.0 -20.2 8.0 -0.2 q3.6 -14.0 7.3 -0.7 q6.2 -21.0 12.4 -0.0 q6.3 -13.4 12.5 1.7"/><path d="M57 605 q4.9 -10.3 9.8 -0.9 q5.9 -15.3 11.7 -0.7 q5.8 -19.8 11.6 -0.9 q5.8 -14.7 11.7 2.9 q4.8 -17.8 9.6 -1.6 q4.5 -18.2 9.1 0.4 q4.5 -8.9 9.1 1.9 q5.0 -18.0 10.0 -0.4 q6.0 -15.8 11.9 2.9 q7.1 -14.4 14.3 -0.1 q4.4 -18.5 8.9 -2.4 q4.7 -19.9 9.5 -2.8"/><path d="M224 608 q4.8 -10.1 9.7 2.7 q6.6 -19.3 13.1 -2.4 q6.6 -11.1 13.3 -1.8 q5.6 -16.5 11.3 -2.3 q6.6 -16.2 13.1 2.4 q7.2 -17.6 14.4 -0.8 q7.3 -18.1 14.6 -1.3 q6.9 -18.2 13.9 -1.4 q4.5 -8.3 9.0 0.2 q4.5 -12.1 9.0 -1.5"/><path d="M368 606 q4.6 -11.9 9.3 0.1 q7.0 -10.2 14.0 2.2 q6.9 -16.5 13.8 0.3 q6.4 -15.5 12.9 1.0 q7.2 -18.9 14.4 -1.4 q3.7 -21.1 7.4 -0.8 q6.6 -11.3 13.3 -0.3 q5.0 -18.2 10.0 2.7 q5.5 -15.9 11.0 -0.9 q4.4 -21.3 8.9 -2.3"/><path d="M531 604 q7.1 -9.4 14.2 0.4 q4.0 -21.8 8.0 -1.1 q7.0 -8.9 14.0 1.0 q3.8 -8.4 7.5 0.4 q7.4 -17.6 14.9 2.1 q6.6 -15.3 13.3 -2.5 q5.6 -10.6 11.2 0.2 q4.9 -15.0 9.8 -1.8 q6.3 -13.8 12.6 -0.1 q3.8 -14.8 7.6 0.3 q7.4 -15.9 14.8 -2.2 q4.7 -12.7 9.4 1.2"/><path d="M716 612 q7.2 -20.0 14.4 2.6 q3.6 -14.9 7.2 0.5 q6.2 -16.6 12.5 0.7 q7.2 -9.2 14.5 0.1 q7.3 -8.4 14.7 -2.3 q7.0 -21.4 14.0 -2.9 q3.6 -19.6 7.3 1.1 q5.6 -16.1 11.2 1.5 q6.7 -8.0 13.5 -2.6 q6.7 -21.7 13.4 2.0 q5.1 -12.7 10.3 -0.9 q3.6 -18.8 7.1 -1.4 q5.8 -15.4 11.7 -1.0 q6.2 -14.4 12.4 -1.6 q7.0 -10.5 14.1 -2.1"/><path d="M920 611 q4.8 -11.3 9.7 0.9 q4.5 -15.3 9.1 -1.5 q7.0 -10.6 14.0 -1.6 q4.7 -12.6 9.4 1.4 q6.2 -19.1 12.4 0.2 q3.8 -18.7 7.6 -1.5 q4.4 -13.8 8.7 2.9 q5.0 -13.0 10.0 2.5 q7.5 -13.4 14.9 -2.2 q6.7 -19.0 13.3 -1.0"/><path d="M1072 606 q5.9 -18.4 11.7 -0.1 q6.8 -8.2 13.5 -0.0 q5.0 -8.9 10.0 2.5 q4.1 -10.9 8.1 2.3 q7.3 -21.0 14.7 -0.9 q7.2 -10.0 14.4 1.3 q7.3 -10.7 14.6 -2.2 q6.2 -20.4 12.4 1.4"/><path d="M523 261 q-8 28 26 55"/><path d="M249 248 q-9 29 -19 59"/><path d="M597 352 q1 43 2 116"/><path d="M143 180 q-8 29 16 115"/><path d="M574 147 q-3 37 -12 105"/><path d="M1052 308 q2 45 -2 63"/><path d="M1023 588 q-10 43 -6 54"/><path d="M226 153 q5 26 -29 65"/><path d="M875 330 q3 34 -19 51"/><path d="M370 82 q-5 39 -8 83"/><path d="M696 231 q-3 47 5 79"/><path d="M611 309 q-3 47 -16 116"/><path d="M930 536 q-7 35 29 70"/><path d="M234 451 q-5 38 -21 116"/><path d="M350 112 q4 30 4 85"/><path d="M1001 338 q-2 20 -0 69"/><path d="M646 401 q-1 23 -0 84"/><path d="M714 584 q-4 33 -25 106"/><path d="M299 508 q6 28 24 85"/><path d="M495 360 q9 35 -1 70"/><path d="M918 332 q-3 26 -17 108"/><path d="M880 588 q8 41 18 100"/><path d="M886 493 q-6 44 -12 67"/><path d="M998 72 q0 30 18 93"/><path d="M989 564 q3 22 10 58"/><path d="M1062 531 q-4 26 12 103"/><path d="M1065 396 q-7 42 -26 111"/><path d="M844 484 q7 37 27 95"/><path d="M562 268 q-3 21 -20 106"/><path d="M293 413 q6 41 1 72"/><path d="M338 161 q3 41 27 73"/><path d="M1006 552 q-4 49 7 117"/><path d="M850 240 q-4 36 -1 52"/><path d="M940 349 q-1 42 -15 64"/><path d="M652 190 q-3 22 -27 75"/><path d="M597 572 q3 32 -6 66"/><path d="M543 578 q-8 33 11 103"/><path d="M626 406 q9 47 -15 88"/><path d="M1077 345 q-6 43 -27 61"/><path d="M622 207 q4 42 -11 104"/><path d="M721 441 q-1 33 -24 83"/><path d="M1034 540 q-9 22 -14 99"/><path d="M506 129 q-1 37 15 78"/><path d="M723 428 q2 21 13 59"/><path d="M116 316 q-10 22 -7 83"/></g>
  <g stroke="#d6cbc3" stroke-width="2" fill="none" opacity="0.7" filter="url(#soft)">
    <path d="M292 640 a80 80 0 1 1 1 0"/><path d="M300 620 a62 62 0 1 1 1 0"/>
  </g>
  <!-- brown strip left -->
  <path d="M0 150 L46 160 L55 200 L57 256 L52 310 L44 360 L36 420 L31 449 L33 480 L38 505 L0 500 Z" fill="#a68e6d"/>
  <!-- top-left map -->
  <path d="M0 0 L100 0 L77 52 L62 87 L52 134 L46 169 L30 236 L10 286 L0 295 Z" fill="url(#mapTL)"/>
  <g clip-path="url(#tlclip)"><path d="M0 0 L100 0 L77 52 L62 87 L52 134 L46 169 L30 236 L10 286 L0 295 Z" fill="url(#streets)" opacity="0.8"/></g>
  <g clip-path="url(#tlclip2)"><path d="M0 0 L100 0 L77 52 L62 87 L52 134 L46 169 L30 236 L10 286 L0 295 Z" fill="url(#grid)" opacity="0.6"/></g>
  <path d="M100 0 L77 52 L62 87 L52 134 L46 169 L30 236 L10 286 L0 295" stroke="#f4f0ee" stroke-width="3" fill="none"/>
  <path d="M0 178 L50 170 M0 236 L30 228" stroke="#80a8c0" stroke-width="3"/>
  <path d="M0 218 L46 218" stroke="#b040c0" stroke-width="1.2"/>
  <rect x="25" y="12" width="40" height="40" fill="#f0ead8" opacity="0.8" transform="rotate(20 45 32)"/>
  <text x="29" y="38" font-family="Liberation Sans" font-weight="bold" font-size="12" fill="#a030b0">N.W.</text>
  <!-- brown piece under map top -->
  <path d="M100 0 L103 0 L103 67 L77 60 L77 52 Z" fill="#b49d7b"/>
  <!-- book -->
  <rect x="103" y="0" width="193" height="67" fill="#dcc8aa"/>
  <rect x="296" y="0" width="156" height="64" fill="#d8c2a2"/>
  <rect x="103" y="0" width="349" height="67" fill="url(#grid)" opacity="0.08"/>
  <path d="M103 66 L434 64" stroke="#5a4030" stroke-width="2"/>
  <path d="M296 0 L296 64" stroke="#b89f80" stroke-width="2"/>
  <g stroke="#6a5a4a" stroke-width="1.2" opacity="0.6"><path d="M128 6 L272 4 M128 14 L272 12 M328 5 L452 5 M328 13 L452 13"/></g>
  <g fill="none" stroke="#b8987a" stroke-width="1.5"><circle cx="335" cy="36" r="6"/><circle cx="362" cy="46" r="8"/><circle cx="392" cy="28" r="6"/><circle cx="318" cy="52" r="4"/></g>
  <!-- khaki paper -->
  <path d="M451 0 L936 0 L917 20 L892 30 L830 42 L758 51 L720 48 L592 47 L451 47 Z" fill="#b3a17d"/>
  <path d="M552 0 L552 47 M657 0 L657 48 M760 0 L760 50" stroke="#a6946d" stroke-width="1.2"/>
  <path d="M742 0 L792 46" stroke="#6a5a40" stroke-width="1"/>
  <path d="M451 47 L592 47 L720 48 L758 51 L830 42 L892 30 L917 20" stroke="#9a7e58" stroke-width="1.5" fill="none"/>
  <rect x="434" y="37" width="76" height="27" fill="#ece6e1"/>
  <!-- top right map -->
  <path d="M936 0 L1144 0 L1144 153 L1096.7 132 L1064 127 L1028.5 120.5 L999 85 L950.7 47.5 L915 18 Z" fill="url(#mapTR)"/>
  <path d="M936 0 L1144 0 L1144 153 L1096.7 132 L1064 127 L1028.5 120.5 L999 85 L950.7 47.5 L915 18 Z" fill="url(#grid)" opacity="0.55"/>
  <path d="M960 10 Q990 40 1000 80 M1000 0 Q1010 50 1040 110 M1090 20 Q1110 60 1140 100 M940 30 L1000 0" stroke="#606050" stroke-width="1" fill="none" opacity="0.55"/>
  <path d="M915 18 L950.7 47.5 L999 85 L1028.5 120.5 L1064 127 L1096.7 132 L1144 153" stroke="#d2d6de" stroke-width="8" fill="none" stroke-linejoin="round"/>
  <!-- gold mirror frame -->
  <ellipse cx="1194" cy="290" rx="114" ry="133" fill="#d0d6de"/>
  <ellipse cx="1194" cy="290" rx="110" ry="130" fill="url(#goldlin)"/>
  <path d="M1086 255 Q1064 290 1080 330 Q1098 320 1100 290 Q1098 262 1086 255 Z" fill="#9a7c48"/>
  <ellipse cx="1194" cy="290" rx="80" ry="95" fill="none" stroke="#6a5030" stroke-width="3"/>
  <ellipse cx="1194" cy="290" rx="95" ry="112" fill="none" stroke="#c8ae78" stroke-width="4" opacity="0.7"/>
  <ellipse cx="1194" cy="290" rx="74" ry="88" fill="#f4f2f0"/>
  <!-- bottom-left map -->
  <path d="M0 482 L40 502 L90 527 L140 552 L190 578 L236 600 L243 607 L246 644 L0 644 Z" fill="#ddd8bf"/>
  <path d="M0 482 L40 502 L90 527 L140 552 L190 578 L236 600 L243 607 L246 644 L0 644 Z" fill="url(#grid)" opacity="0.7"/>
  <path d="M0 570 Q20 560 40 580 Q60 600 50 644 L0 644 Z" fill="#e3b8a8"/>
  <path d="M0 482 L40 502 L90 527 L140 552 L190 578 L236 600 L243 607 L246 644" stroke="#f4f2ee" stroke-width="3" fill="none"/>
  <path d="M165 575 L165 600 L155 605 L150 630 L140 644" stroke="#e02828" stroke-width="2.2" fill="none"/>
  <path d="M60 520 L244 644" stroke="#e07070" stroke-width="1.2" fill="none"/>
  <path d="M0 600 Q60 580 120 600" stroke="#e07070" stroke-width="1" fill="none"/>
  <!-- bottom center map -->
  <path d="M244 644 L252 626 L300 610 L340 596 L400 583 L470 588 L560 600 L610 612 L648 644 Z" fill="#c4c0a6"/>
  <path d="M244 644 L252 626 L300 600 L330 644 Z" fill="#d8cfa8"/>
  <path d="M412 588 Q440 615 432 644" stroke="#a88068" stroke-width="6" fill="none"/>
  <path d="M470 600 Q520 620 560 644 M560 610 Q590 620 620 644" stroke="#8a8470" stroke-width="1" fill="none"/>
  <path d="M252 626 L300 610 L340 596 L400 583 L470 588 L560 600 L610 612 L648 644" stroke="#f2efea" stroke-width="2.5" fill="none"/>
  <!-- bottom right map -->
  <path d="M1144 428 L1100 498 L1068 540 L1056 580 L1053 644 L1144 644 Z" fill="#dca393"/>
  <path d="M1144 428 L1100 498 L1068 540 L1056 580 L1053 644 L1144 644 Z" fill="url(#streets)" opacity="0.6"/>
  <path d="M1062 560 Q1100 520 1144 505" stroke="#8fb0c0" stroke-width="4" fill="none"/>
  <!-- building -->
  <g>
    <path d="M899 490 L899 500 L906 500 L906 488 Z" fill="#e8eef0"/>
    <path d="M888 505 Q888 488 910 486 Q932 488 932 505 L936 512 L936 575 L948 580 L948 644 L872 644 L872 580 L884 575 L884 512 Z" fill="#a89486"/>
    <path d="M890 506 Q890 486 910 484 Q930 486 930 506 Z" fill="#9a8450"/>
    <circle cx="910" cy="536" r="8" fill="#5a4838" stroke="#c0a870" stroke-width="2"/>
    <path d="M884 560 L936 560 M884 520 L936 520" stroke="#7a6656" stroke-width="2"/>
    <path d="M766 644 L766 598 L770 590 Q772 566 800 558 L804 546 L808 558 Q834 566 838 590 L842 596 L842 644 Z" fill="url(#bldg)"/>
    <path d="M770 592 Q772 566 800 558 Q834 566 838 592 Z" fill="#7a6658"/>
    <path d="M984 644 L984 598 L988 590 Q990 566 1018 558 L1022 546 L1026 558 Q1052 566 1054 590 L1056 596 L1056 644 Z" fill="url(#bldg)"/>
    <path d="M988 592 Q990 566 1018 558 Q1052 566 1054 592 Z" fill="#7a6658"/>
    <path d="M770 598 L805 584 L840 598 Z M986 598 L1020 584 L1054 598 Z" fill="#8a7666"/>
    <rect x="826" y="554" width="7" height="32" fill="#9a8474"/><rect x="836" y="556" width="7" height="30" fill="#9a8474"/>
    <rect x="978" y="554" width="7" height="32" fill="#9a8474"/><rect x="1032" y="556" width="6" height="28" fill="#9a8474"/>
    <rect x="842" y="590" width="142" height="54" fill="url(#bldg)"/>
    <rect x="842" y="586" width="142" height="6" fill="#c0b0a0"/>
    <path d="M766 614 L1056 614 M766 634 L1056 634" stroke="#6e5a4c" stroke-width="3"/>
    <g fill="#6a564a"><rect x="780" y="620" width="9" height="11" rx="4"/><rect x="808" y="620" width="9" height="11" rx="4"/><rect x="852" y="621" width="9" height="11" rx="4"/><rect x="878" y="621" width="9" height="11" rx="4"/><rect x="944" y="621" width="9" height="11" rx="4"/><rect x="966" y="621" width="9" height="11" rx="4"/><rect x="998" y="620" width="9" height="11" rx="4"/><rect x="1026" y="620" width="9" height="11" rx="4"/></g>
    <g fill="#6a564a"><rect x="780" y="600" width="8" height="9"/><rect x="810" y="600" width="8" height="9"/><rect x="998" y="600" width="8" height="9"/><rect x="1028" y="600" width="8" height="9"/></g>
    <rect x="856" y="570" width="7" height="18" fill="#8a7464"/><rect x="958" y="572" width="7" height="16" fill="#8a7464"/>
    <path d="M906 580 L926 610 L920 644" stroke="#eef2f4" stroke-width="2" fill="none"/>
  </g>
  <!-- title text -->
  <g font-family="Liberation Serif" font-weight="bold" font-size="44" fill="#683224" stroke="#683224" stroke-width="0.7" text-anchor="middle">
    <text x="558.5" y="198.5">обговорення проблемної теми:</text>
    <text x="558" y="237.1">«Огляд історії етногеографічних</text>
    <text x="556.5" y="275.7">досліджень в Україні. Методологія</text>
    <text x="560.5" y="314.3">етногеографічного дослідження</text>
    <text x="554.5" y="352.9">держав. Методика та загально-</text>
    <text x="556.5" y="391.5">наукові методирегіональних</text>
    <text x="559.5" y="430.1">етногеографічних досліджень»</text>
  </g>
</svg>

</div>
  <div class="a" style="left:419px;top:781px;width:306px;height:5px;border-radius:3px;background:#fff"></div>
</div>

<div id="strip" class="a">
  <div class="tile" style="top:0;height:113px;background:#141619;border-radius:12px 12px 0 0"></div>
  <div class="t" style="left:8px;top:46.3px;font-size:20px;font-weight:bold;color:#f4f4f4;letter-spacing:0.55px">Barannik&nbsp; liza&nbsp; Ty...</div>
  <div class="lbl" style="top:86px;left:3px;padding:0 6px 0 5px;height:24px;background:#2a2b2d;border-radius:6px">Barannik liza Typ 2501-1</div>
  <!-- tile 2 avatar Epyk -->
  <div class="a" style="left:56px;top:124px;width:89px;height:89.5px;border-radius:9px;overflow:hidden;background:linear-gradient(90deg,#e4dcd8,#efe9e6)">
    <div class="a" style="left:0;top:0;width:89px;height:90px;filter:blur(1.5px)">
<div class="a" style="left:6px;top:2px;width:70px;height:82px;background:radial-gradient(ellipse at 50% 35%,#eadbb8 0%,#dcc498 55%,#c8ac7c 80%);border-radius:45% 45% 30% 30%;"></div><div class="a" style="left:21px;top:20px;width:38px;height:40px;background:radial-gradient(ellipse at 50% 45%,#f0cab4,#dcaa92);border-radius:50%;"></div><div class="a" style="left:33px;top:46px;width:14px;height:4px;background:#c83040;border-radius:2px;"></div><div class="a" style="left:14px;top:70px;width:62px;height:30px;background:#1c1618;border-radius:30px 30px 0 0;"></div><div class="a" style="left:58px;top:70px;width:30px;height:22px;background:linear-gradient(135deg,#3a6a90,#c04020 50%,#203a50);border-radius:8px;"></div><div class="a" style="left:2px;top:44px;width:18px;height:40px;background:#d8be8c;border-radius:50%;"></div><div class="a" style="left:60px;top:40px;width:18px;height:44px;background:#d4b888;border-radius:50%;"></div>
    </div>
  </div>
  <div class="lbl" style="top:198px;padding-left:4px">Єпик Лариса</div>
  <!-- tile 3 video Dmytro in car -->
  <div class="tile" style="top:225px;height:113px;background:linear-gradient(180deg,#8a9698 0%,#6a7678 25%,#4a565a 55%,#2e3a44 100%)">
    <div class="a" style="left:0;top:0;width:200px;height:113px;filter:blur(1.8px)">
<div class="a" style="left:150px;top:2px;width:56px;height:78px;background:linear-gradient(160deg,#f4f4f2,#e0e4e2 60%,#a8b0b0);border-radius:40px 0 0 50px;"></div><div class="a" style="left:142px;top:0px;width:14px;height:100px;background:#2a3a4c;border-radius:8px;"></div><div class="a" style="left:-4px;top:57px;width:46px;height:22px;background:#e6eaea;border-radius:4px;"></div><div class="a" style="left:28px;top:72px;width:30px;height:41px;background:#24282c;border-radius:6px;"></div><div class="a" style="left:40px;top:64px;width:165px;height:52px;background:#2c3c58;border-radius:46px 50px 0 0;"></div><div class="a" style="left:60px;top:72px;width:40px;height:40px;background:#3a4c6a;border-radius:20px;"></div><div class="a" style="left:82px;top:10px;width:58px;height:60px;background:radial-gradient(ellipse at 50% 55%,#dccac0,#c4aca0 70%,#8a7468);border-radius:46% 46% 40% 40%;"></div><div class="a" style="left:80px;top:4px;width:62px;height:22px;background:#2a2a2c;border-radius:30px 30px 6px 6px;"></div>
    </div>
  </div>
  <div class="lbl" style="top:311px;padding-left:27px"><svg class="a" style="left:3px;top:3px" width="18" height="18" viewBox="0 0 18 18"><rect x="5.8" y="1" width="6.6" height="13" rx="3.3" fill="#f05a5a"/><rect x="6.6" y="14.8" width="5" height="2.2" fill="#f05a5a"/><path d="M0.6 17.2 L17.2 0.8" stroke="#2c2e32" stroke-width="2.8"/><path d="M0.9 16.9 L16.9 1.1" stroke="#f05a5a" stroke-width="1.4"/></svg>Дмитро Баращук</div>
  <!-- tile 4 avatar Tamila -->
  <div class="a" style="left:56px;top:348px;width:89px;height:88px;border-radius:9px;overflow:hidden;background:linear-gradient(180deg,#a8b4c8 0%,#d8bca8 35%,#f2b078 52%,#c8a080 68%,#dcd8d8 100%)">
    <div class="a" style="left:0;top:0;width:89px;height:88px;filter:blur(1.2px)">
<div class="a" style="left:0px;top:28px;width:20px;height:60px;background:#3c4434;border-radius:10px 10px 0 0;"></div><div class="a" style="left:62px;top:22px;width:28px;height:66px;background:#4c5444;border-radius:14px 14px 0 0;"></div><div class="a" style="left:30px;top:38px;width:34px;height:30px;background:#e04a28;border-radius:50%;"></div><div class="a" style="left:36px;top:44px;width:20px;height:22px;background:#f0c0a8;border-radius:50%;"></div><div class="a" style="left:22px;top:62px;width:46px;height:36px;background:#262e40;border-radius:22px 22px 0 0;"></div>
    </div>
  </div>
  <div class="lbl" style="top:423px;padding-left:27px"><svg class="a" style="left:3px;top:3px" width="18" height="18" viewBox="0 0 18 18"><rect x="5.8" y="1" width="6.6" height="13" rx="3.3" fill="#f05a5a"/><rect x="6.6" y="14.8" width="5" height="2.2" fill="#f05a5a"/><path d="M0.6 17.2 L17.2 0.8" stroke="#2c2e32" stroke-width="2.8"/><path d="M0.9 16.9 L16.9 1.1" stroke="#f05a5a" stroke-width="1.4"/></svg>Таміла Григоренко</div>
  <!-- tile 5 Andrii -->
  <div class="tile" style="top:450px;height:113px;background:linear-gradient(90deg,#c4ccc2,#b4c2b4 60%,#a8b8aa)">
    <div class="a" style="left:0;top:0;width:200px;height:113px;filter:blur(2px)">
<div class="a" style="left:160px;top:22px;width:38px;height:30px;background:#c8b090;border-radius:6px;"></div><div class="a" style="left:40px;top:88px;width:130px;height:40px;background:#3a3e46;border-radius:40px 40px 0 0;"></div><div class="a" style="left:80px;top:26px;width:42px;height:60px;background:radial-gradient(ellipse at 50% 50%,#dcc4b4,#bc9c8c 75%,#8a7060);border-radius:48%;"></div><div class="a" style="left:80px;top:18px;width:42px;height:20px;background:#76644e;border-radius:22px 22px 8px 8px;"></div>
    </div>
  </div>
  <div class="lbl" style="top:536px;padding-left:27px"><svg class="a" style="left:3px;top:3px" width="18" height="18" viewBox="0 0 18 18"><rect x="5.8" y="1" width="6.6" height="13" rx="3.3" fill="#f05a5a"/><rect x="6.6" y="14.8" width="5" height="2.2" fill="#f05a5a"/><path d="M0.6 17.2 L17.2 0.8" stroke="#2c2e32" stroke-width="2.8"/><path d="M0.9 16.9 L16.9 1.1" stroke="#f05a5a" stroke-width="1.4"/></svg>Andrii Chortenko</div>
  <!-- tile 6 Roman -->
  <div class="tile" style="top:563px;height:112px;background:linear-gradient(180deg,#bccaba,#aabcaa)">
    <div class="a" style="left:0;top:0;width:200px;height:112px;filter:blur(1.8px)">
<div class="a" style="left:172px;top:0px;width:28px;height:36px;background:linear-gradient(135deg,#f4f4f0,#c8d0d0);border-radius:0;border:2px solid #607080"></div><div class="a" style="left:0px;top:78px;width:140px;height:40px;background:#3e4450;border-radius:40px 60px 0 0;"></div><div class="a" style="left:72px;top:18px;width:80px;height:84px;background:radial-gradient(ellipse at 45% 55%,#ead4c8,#d0b0a0 65%,#8a6a5a);border-radius:46%;"></div><div class="a" style="left:92px;top:10px;width:68px;height:36px;background:#3a3430;border-radius:34px 34px 6px 30px;"></div>
    </div>
  </div>
  <div class="lbl" style="top:648px;padding-left:27px"><svg class="a" style="left:3px;top:3px" width="18" height="18" viewBox="0 0 18 18"><rect x="5.8" y="1" width="6.6" height="13" rx="3.3" fill="#f05a5a"/><rect x="6.6" y="14.8" width="5" height="2.2" fill="#f05a5a"/><path d="M0.6 17.2 L17.2 0.8" stroke="#2c2e32" stroke-width="2.8"/><path d="M0.9 16.9 L16.9 1.1" stroke="#f05a5a" stroke-width="1.4"/></svg>Роман Зайченко</div>
  <!-- tile 7 avatar Olena -->
  <div class="a" style="left:56px;top:686px;width:89px;height:88px;border-radius:9px;overflow:hidden;background:linear-gradient(180deg,#ecdcc4 0%,#dcc0a0 60%,#c89878 100%)">
    <div class="a" style="left:0;top:0;width:89px;height:88px;filter:blur(1px)">
<div class="a" style="left:50px;top:0px;width:14px;height:62px;background:#f0c830;border-radius:0;"></div><div class="a" style="left:62px;top:0px;width:12px;height:62px;background:#2f6fc0;border-radius:0;"></div><div class="a" style="left:68px;top:16px;width:22px;height:44px;background:#5a8a40;border-radius:50%;"></div><div class="a" style="left:26px;top:26px;width:36px;height:40px;background:#201818;border-radius:50%;"></div><div class="a" style="left:33px;top:33px;width:22px;height:26px;background:#e0b0a0;border-radius:50%;"></div><div class="a" style="left:12px;top:58px;width:66px;height:40px;background:#181616;border-radius:24px 24px 0 0;"></div><div class="a" style="left:30px;top:58px;width:30px;height:10px;background:#a4ccc4;border-radius:6px;"></div><div class="a" style="left:0px;top:76px;width:89px;height:12px;background:#3a2a24;border-radius:0;"></div>
    </div>
  </div>
  <div class="lbl" style="top:761px;padding-left:27px"><svg class="a" style="left:3px;top:3px" width="18" height="18" viewBox="0 0 18 18"><rect x="5.8" y="1" width="6.6" height="13" rx="3.3" fill="#f05a5a"/><rect x="6.6" y="14.8" width="5" height="2.2" fill="#f05a5a"/><path d="M0.6 17.2 L17.2 0.8" stroke="#2c2e32" stroke-width="2.8"/><path d="M0.9 16.9 L16.9 1.1" stroke="#f05a5a" stroke-width="1.4"/></svg>Олена Кириленко</div>
  <div class="a" style="left:-1.5px;top:-1px;width:203px;height:115px;border:3.5px solid #14ee94;border-radius:11px 11px 0 0"></div>
</div>
<div id="panel" class="a">
  <div id="phead" class="a"></div>
  <div class="t" style="left:132.5px;top:25.5px;font-size:15.7px;font-weight:bold;color:#121222">Uczestnicy (18)</div>
  <svg class="a" style="left:374px;top:21px" width="22" height="22" viewBox="0 0 22 22"><path d="M8.8 3.4 L6.8 3.4 Q3.1 3.4 3.1 7.1 L3.1 15.2 Q3.1 19.5 7.1 19.5 L15.2 19.5 Q19.3 19.5 19.3 15.4 L19.3 13.3" stroke="#6b7280" stroke-width="2.4" fill="none" stroke-linecap="round"/><path d="M9.6 13 L17.5 5.1" stroke="#6b7280" stroke-width="2.4" stroke-linecap="round"/><path d="M12.6 2.4 L20.2 2.4 L20.2 10 Z" fill="#6b7280" stroke="#6b7280" stroke-width="1.2" stroke-linejoin="round"/></svg>
  <svg class="a" style="left:410px;top:24px" width="16" height="16" viewBox="0 0 16 16"><path d="M1.6 1.6 L14 14 M14 1.6 L1.6 14" stroke="#6b6e80" stroke-width="1.6"/></svg>
  <div class="a" style="left:28.5px;top:73.5px;width:391px;height:39.5px;border:1.5px solid #b9b7cf;border-radius:10px"></div>
  <svg class="a" style="left:41px;top:84px" width="20" height="20" viewBox="0 0 20 20"><circle cx="8.6" cy="8.8" r="6" stroke="#6b6e80" stroke-width="1.5" fill="none"/><path d="M13 13.2 L17.2 17.4" stroke="#6b6e80" stroke-width="1.6"/></svg>
  <div class="t" style="left:63px;top:85px;font-size:15.2px;color:#6e7088">Znajdź uczestnika</div>
  <div class="a" style="left:0;top:116px;width:446px;height:774px;overflow:hidden">
  <div class="a" style="left:0;top:-116px;width:446px;height:1000px">
<div class="row" style="top:123.3px"><div class="av" style="background:#ece8e4"><div class="a" style="left:2px;top:2px;width:30px;height:32px;border-radius:50%;background:radial-gradient(ellipse at 50% 40%,#e6d2a8,#cdb080 70%,#ece8e4 72%)"></div><div class="a" style="left:10px;top:7px;width:14px;height:18px;border-radius:50%;background:radial-gradient(ellipse at 50% 45%,#f0c8b0,#d8a088)"></div><div class="a" style="left:5px;top:25px;width:24px;height:12px;border-radius:14px 14px 0 0;background:#161214"></div></div><div class="nm">Єпик Лариса (Prowadzący, ja)</div><svg class="a" style="left:328px;top:7.7px" width="20" height="22" viewBox="0 0 20 22"><rect x="6.7" y="0.9" width="6.5" height="11.6" rx="3.25" stroke="#6e6f7a" stroke-width="1.3" fill="#fff"/><path d="M6.7 8.5 L13.2 8.5 L13.2 9.3 A3.25 3.25 0 0 1 6.7 9.3 Z" fill="#6e6f7a"/><path d="M4.3 8.6 Q4.4 15.6 9.95 15.6 Q15.5 15.6 15.6 8.6" stroke="#6e6f7a" stroke-width="1.3" fill="none"/><path d="M9.95 15.6 L9.95 18.6 M6.8 18.7 L13.1 18.7" stroke="#6e6f7a" stroke-width="1.3"/></svg><svg class="a" style="left:357px;top:8px" width="24" height="22" viewBox="0 0 24 22"><path d="M13.6 4.2 L5 4.2 Q2.4 4.2 2.4 6.8 L2.4 13.2 Q2.4 15 4 15.4" stroke="#e0282e" stroke-width="1.4" fill="none"/><path d="M8.3 15.6 L13.7 15.6 Q15.2 15.6 15.2 14 L15.2 12 L20.6 15.6 L20.6 5.4 L15.6 9.6" stroke="#e0282e" stroke-width="1.4" fill="none" stroke-linejoin="round"/><path d="M2 20 L22.4 0.3" stroke="#e0282e" stroke-width="1.5"/></svg></div>
<div class="row" style="top:174.3px"><div class="av" style="background:#1c9c7e;color:#fff;font-size:15px;line-height:34px;text-align:center;font-weight:bold">BL</div><div class="nm">Barannik liza Typ 2501-1</div><div class="a" style="left:298px;top:9.5px;width:20.5px;height:15px;border-radius:3px;background:#0aa63a"><svg class="a" style="left:0;top:0" width="20" height="15" viewBox="0 0 20 15"><path d="M10.2 11.6 L10.2 4.6 M7.2 7.4 L10.2 4.2 L13.2 7.4" stroke="#fff" stroke-width="2" fill="none"/></svg></div><svg class="a" style="left:328px;top:7.7px" width="20" height="22" viewBox="0 0 20 22"><rect x="6.7" y="0.9" width="6.5" height="11.6" rx="3.25" stroke="#6e6f7a" stroke-width="1.3" fill="#fff"/><path d="M6.7 8.5 L13.2 8.5 L13.2 9.3 A3.25 3.25 0 0 1 6.7 9.3 Z" fill="#6e6f7a"/><path d="M4.3 8.6 Q4.4 15.6 9.95 15.6 Q15.5 15.6 15.6 8.6" stroke="#6e6f7a" stroke-width="1.3" fill="none"/><path d="M9.95 15.6 L9.95 18.6 M6.8 18.7 L13.1 18.7" stroke="#6e6f7a" stroke-width="1.3"/></svg><svg class="a" style="left:357px;top:8px" width="24" height="22" viewBox="0 0 24 22"><path d="M13.6 4.2 L5 4.2 Q2.4 4.2 2.4 6.8 L2.4 13.2 Q2.4 15 4 15.4" stroke="#e0282e" stroke-width="1.4" fill="none"/><path d="M8.3 15.6 L13.7 15.6 Q15.2 15.6 15.2 14 L15.2 12 L20.6 15.6 L20.6 5.4 L15.6 9.6" stroke="#e0282e" stroke-width="1.4" fill="none" stroke-linejoin="round"/><path d="M2 20 L22.4 0.3" stroke="#e0282e" stroke-width="1.5"/></svg></div>
<div class="row" style="top:225.3px"><div class="av" style="background:#2a221e"><div class="a" style="left:7px;top:5px;width:20px;height:24px;border-radius:50%;background:radial-gradient(ellipse at 50% 45%,#c8b0a8,#604840)"></div><div class="a" style="left:0px;top:0px;width:8px;height:34px;border-radius:0;background:#1a1210"></div><div class="a" style="left:14px;top:16px;width:6px;height:5px;border-radius:50%;background:radial-gradient(ellipse at 50% 45%,#3a3030,#3a3030)"></div></div><div class="nm">19 Прасолова Діана</div><svg class="a" style="left:326.5px;top:6.5px" width="22" height="22" viewBox="0 0 22 22"><path d="M8.5 11.6 L8.5 5.1 A2.95 2.95 0 0 1 14.4 5.1 L14.4 6.6" stroke="#e0282e" stroke-width="1.3" fill="none"/><path d="M5.6 12.8 Q6 17 11.45 17.1 Q16.5 17 16.9 12.4" stroke="#e0282e" stroke-width="1.2" fill="none" opacity="0.85"/><path d="M11.45 17.1 L11.45 19.6 M8.5 19.8 L14.4 19.8" stroke="#e0282e" stroke-width="1.3"/><path d="M2 20.5 L20.5 2" stroke="#e0282e" stroke-width="1.5"/></svg><svg class="a" style="left:357px;top:8px" width="24" height="22" viewBox="0 0 24 22"><path d="M13.6 4.2 L5 4.2 Q2.4 4.2 2.4 6.8 L2.4 13.2 Q2.4 15 4 15.4" stroke="#e0282e" stroke-width="1.4" fill="none"/><path d="M8.3 15.6 L13.7 15.6 Q15.2 15.6 15.2 14 L15.2 12 L20.6 15.6 L20.6 5.4 L15.6 9.6" stroke="#e0282e" stroke-width="1.4" fill="none" stroke-linejoin="round"/><path d="M2 20 L22.4 0.3" stroke="#e0282e" stroke-width="1.5"/></svg></div>
<div class="row" style="top:276.3px"><div class="av" style="background:linear-gradient(180deg,#c8ccd0,#9ca0a8)"><div class="a" style="left:11px;top:5px;width:12px;height:15px;border-radius:50%;background:radial-gradient(ellipse at 50% 45%,#e0c0a8,#b08870)"></div><div class="a" style="left:4px;top:20px;width:26px;height:16px;border-radius:14px 14px 0 0;background:#1e2840"></div><div class="a" style="left:15px;top:20px;width:4px;height:14px;border-radius:0;background:#f0f0f0"></div></div><div class="nm">Andrii Chortenko</div><svg class="a" style="left:326.5px;top:6.5px" width="22" height="22" viewBox="0 0 22 22"><path d="M8.5 11.6 L8.5 5.1 A2.95 2.95 0 0 1 14.4 5.1 L14.4 6.6" stroke="#e0282e" stroke-width="1.3" fill="none"/><path d="M5.6 12.8 Q6 17 11.45 17.1 Q16.5 17 16.9 12.4" stroke="#e0282e" stroke-width="1.2" fill="none" opacity="0.85"/><path d="M11.45 17.1 L11.45 19.6 M8.5 19.8 L14.4 19.8" stroke="#e0282e" stroke-width="1.3"/><path d="M2 20.5 L20.5 2" stroke="#e0282e" stroke-width="1.5"/></svg><svg class="a" style="left:357px;top:8px" width="24" height="22" viewBox="0 0 24 22"><rect x="2.3" y="4.1" width="14.5" height="11.5" rx="3" stroke="#666878" stroke-width="1.4" fill="none"/><path d="M16.8 8.5 L20.9 5.6 L20.9 14.3 L16.8 11.4" stroke="#666878" stroke-width="1.4" fill="none" stroke-linejoin="round"/></svg></div>
<div class="row" style="top:327.3px"><div class="av" style="background:#a445c2;color:#fff;font-size:20px;line-height:34px;text-align:center;font-weight:normal">K</div><div class="nm">Kristina Stryzhak</div><svg class="a" style="left:326.5px;top:6.5px" width="22" height="22" viewBox="0 0 22 22"><path d="M8.5 11.6 L8.5 5.1 A2.95 2.95 0 0 1 14.4 5.1 L14.4 6.6" stroke="#e0282e" stroke-width="1.3" fill="none"/><path d="M5.6 12.8 Q6 17 11.45 17.1 Q16.5 17 16.9 12.4" stroke="#e0282e" stroke-width="1.2" fill="none" opacity="0.85"/><path d="M11.45 17.1 L11.45 19.6 M8.5 19.8 L14.4 19.8" stroke="#e0282e" stroke-width="1.3"/><path d="M2 20.5 L20.5 2" stroke="#e0282e" stroke-width="1.5"/></svg><svg class="a" style="left:357px;top:8px" width="24" height="22" viewBox="0 0 24 22"><path d="M13.6 4.2 L5 4.2 Q2.4 4.2 2.4 6.8 L2.4 13.2 Q2.4 15 4 15.4" stroke="#e0282e" stroke-width="1.4" fill="none"/><path d="M8.3 15.6 L13.7 15.6 Q15.2 15.6 15.2 14 L15.2 12 L20.6 15.6 L20.6 5.4 L15.6 9.6" stroke="#e0282e" stroke-width="1.4" fill="none" stroke-linejoin="round"/><path d="M2 20 L22.4 0.3" stroke="#e0282e" stroke-width="1.5"/></svg></div>
<div class="row" style="top:378.3px"><div class="av" style="background:linear-gradient(90deg,#b8c4c0,#e8ecec)"><div class="a" style="left:10px;top:4px;width:14px;height:18px;border-radius:50%;background:radial-gradient(ellipse at 50% 45%,#c09070,#805840)"></div><div class="a" style="left:3px;top:22px;width:28px;height:14px;border-radius:14px 14px 0 0;background:#f0f0f0"></div><div class="a" style="left:12px;top:14px;width:10px;height:6px;border-radius:40%;background:#302020"></div></div><div class="nm">Vlad Vasilchenko</div><svg class="a" style="left:326.5px;top:6.5px" width="22" height="22" viewBox="0 0 22 22"><path d="M8.5 11.6 L8.5 5.1 A2.95 2.95 0 0 1 14.4 5.1 L14.4 6.6" stroke="#e0282e" stroke-width="1.3" fill="none"/><path d="M5.6 12.8 Q6 17 11.45 17.1 Q16.5 17 16.9 12.4" stroke="#e0282e" stroke-width="1.2" fill="none" opacity="0.85"/><path d="M11.45 17.1 L11.45 19.6 M8.5 19.8 L14.4 19.8" stroke="#e0282e" stroke-width="1.3"/><path d="M2 20.5 L20.5 2" stroke="#e0282e" stroke-width="1.5"/></svg><svg class="a" style="left:357px;top:8px" width="24" height="22" viewBox="0 0 24 22"><rect x="2.3" y="4.1" width="14.5" height="11.5" rx="3" stroke="#666878" stroke-width="1.4" fill="none"/><path d="M16.8 8.5 L20.9 5.6 L20.9 14.3 L16.8 11.4" stroke="#666878" stroke-width="1.4" fill="none" stroke-linejoin="round"/></svg></div>
<div class="row" style="top:429.3px"><div class="av" style="background:linear-gradient(180deg,#c89040,#a06020)"><div class="a" style="left:15px;top:4px;width:11px;height:14px;border-radius:50%;background:radial-gradient(ellipse at 50% 45%,#e0b090,#a07050)"></div><div class="a" style="left:8px;top:16px;width:24px;height:20px;border-radius:14px 14px 0 0;background:#1a1a22"></div></div><div class="nm">Алєйнова Поліна ТУР 2401-1</div><svg class="a" style="left:326.5px;top:6.5px" width="22" height="22" viewBox="0 0 22 22"><path d="M8.5 11.6 L8.5 5.1 A2.95 2.95 0 0 1 14.4 5.1 L14.4 6.6" stroke="#e0282e" stroke-width="1.3" fill="none"/><path d="M5.6 12.8 Q6 17 11.45 17.1 Q16.5 17 16.9 12.4" stroke="#e0282e" stroke-width="1.2" fill="none" opacity="0.85"/><path d="M11.45 17.1 L11.45 19.6 M8.5 19.8 L14.4 19.8" stroke="#e0282e" stroke-width="1.3"/><path d="M2 20.5 L20.5 2" stroke="#e0282e" stroke-width="1.5"/></svg><svg class="a" style="left:357px;top:8px" width="24" height="22" viewBox="0 0 24 22"><path d="M13.6 4.2 L5 4.2 Q2.4 4.2 2.4 6.8 L2.4 13.2 Q2.4 15 4 15.4" stroke="#e0282e" stroke-width="1.4" fill="none"/><path d="M8.3 15.6 L13.7 15.6 Q15.2 15.6 15.2 14 L15.2 12 L20.6 15.6 L20.6 5.4 L15.6 9.6" stroke="#e0282e" stroke-width="1.4" fill="none" stroke-linejoin="round"/><path d="M2 20 L22.4 0.3" stroke="#e0282e" stroke-width="1.5"/></svg></div>
<div class="row" style="top:480.3px"><div class="av" style="background:#161010"><div class="a" style="left:6px;top:0px;width:22px;height:34px;border-radius:45%;background:#2a1c18"></div><div class="a" style="left:9px;top:7px;width:16px;height:22px;border-radius:50%;background:radial-gradient(ellipse at 50% 45%,#e0c0b8,#b08880)"></div></div><div class="nm">Гомаз Діана Тур 2501-1</div><svg class="a" style="left:326.5px;top:6.5px" width="22" height="22" viewBox="0 0 22 22"><path d="M8.5 11.6 L8.5 5.1 A2.95 2.95 0 0 1 14.4 5.1 L14.4 6.6" stroke="#e0282e" stroke-width="1.3" fill="none"/><path d="M5.6 12.8 Q6 17 11.45 17.1 Q16.5 17 16.9 12.4" stroke="#e0282e" stroke-width="1.2" fill="none" opacity="0.85"/><path d="M11.45 17.1 L11.45 19.6 M8.5 19.8 L14.4 19.8" stroke="#e0282e" stroke-width="1.3"/><path d="M2 20.5 L20.5 2" stroke="#e0282e" stroke-width="1.5"/></svg><svg class="a" style="left:357px;top:8px" width="24" height="22" viewBox="0 0 24 22"><path d="M13.6 4.2 L5 4.2 Q2.4 4.2 2.4 6.8 L2.4 13.2 Q2.4 15 4 15.4" stroke="#e0282e" stroke-width="1.4" fill="none"/><path d="M8.3 15.6 L13.7 15.6 Q15.2 15.6 15.2 14 L15.2 12 L20.6 15.6 L20.6 5.4 L15.6 9.6" stroke="#e0282e" stroke-width="1.4" fill="none" stroke-linejoin="round"/><path d="M2 20 L22.4 0.3" stroke="#e0282e" stroke-width="1.5"/></svg></div>
<div class="row" style="top:531.3px"><div class="av" style="background:linear-gradient(180deg,#c8c4c0,#a8a4a0)"><div class="a" style="left:9px;top:5px;width:16px;height:18px;border-radius:50%;background:radial-gradient(ellipse at 50% 45%,#d0a090,#906050)"></div><div class="a" style="left:3px;top:21px;width:28px;height:15px;border-radius:14px 14px 0 0;background:#2a2c38"></div></div><div class="nm">Дмитро Баращук</div><svg class="a" style="left:326.5px;top:6.5px" width="22" height="22" viewBox="0 0 22 22"><path d="M8.5 11.6 L8.5 5.1 A2.95 2.95 0 0 1 14.4 5.1 L14.4 6.6" stroke="#e0282e" stroke-width="1.3" fill="none"/><path d="M5.6 12.8 Q6 17 11.45 17.1 Q16.5 17 16.9 12.4" stroke="#e0282e" stroke-width="1.2" fill="none" opacity="0.85"/><path d="M11.45 17.1 L11.45 19.6 M8.5 19.8 L14.4 19.8" stroke="#e0282e" stroke-width="1.3"/><path d="M2 20.5 L20.5 2" stroke="#e0282e" stroke-width="1.5"/></svg><svg class="a" style="left:357px;top:8px" width="24" height="22" viewBox="0 0 24 22"><rect x="2.3" y="4.1" width="14.5" height="11.5" rx="3" stroke="#666878" stroke-width="1.4" fill="none"/><path d="M16.8 8.5 L20.9 5.6 L20.9 14.3 L16.8 11.4" stroke="#666878" stroke-width="1.4" fill="none" stroke-linejoin="round"/></svg></div>
<div class="row" style="top:582.3px"><div class="av" style="background:linear-gradient(90deg,#303030,#909090 60%,#606060)"><div class="a" style="left:12px;top:5px;width:12px;height:15px;border-radius:50%;background:radial-gradient(ellipse at 50% 45%,#e0e0e0,#a0a0a0)"></div><div class="a" style="left:6px;top:18px;width:22px;height:18px;border-radius:14px 14px 0 0;background:#d8d8d8"></div></div><div class="nm">Зінченко Катерина ТУР 2501-1</div><svg class="a" style="left:326.5px;top:6.5px" width="22" height="22" viewBox="0 0 22 22"><path d="M8.5 11.6 L8.5 5.1 A2.95 2.95 0 0 1 14.4 5.1 L14.4 6.6" stroke="#e0282e" stroke-width="1.3" fill="none"/><path d="M5.6 12.8 Q6 17 11.45 17.1 Q16.5 17 16.9 12.4" stroke="#e0282e" stroke-width="1.2" fill="none" opacity="0.85"/><path d="M11.45 17.1 L11.45 19.6 M8.5 19.8 L14.4 19.8" stroke="#e0282e" stroke-width="1.3"/><path d="M2 20.5 L20.5 2" stroke="#e0282e" stroke-width="1.5"/></svg><svg class="a" style="left:357px;top:8px" width="24" height="22" viewBox="0 0 24 22"><path d="M13.6 4.2 L5 4.2 Q2.4 4.2 2.4 6.8 L2.4 13.2 Q2.4 15 4 15.4" stroke="#e0282e" stroke-width="1.4" fill="none"/><path d="M8.3 15.6 L13.7 15.6 Q15.2 15.6 15.2 14 L15.2 12 L20.6 15.6 L20.6 5.4 L15.6 9.6" stroke="#e0282e" stroke-width="1.4" fill="none" stroke-linejoin="round"/><path d="M2 20 L22.4 0.3" stroke="#e0282e" stroke-width="1.5"/></svg></div>
<div class="row" style="top:633.3px"><div class="av" style="background:#8a7060"><div class="a" style="left:2px;top:2px;width:30px;height:34px;border-radius:50%;background:radial-gradient(ellipse at 50% 45%,#d8a890,#a07060)"></div><div class="a" style="left:4px;top:12px;width:26px;height:8px;border-radius:40%;background:#181818"></div></div><div class="nm">Иван Леонтьев</div><svg class="a" style="left:326.5px;top:6.5px" width="22" height="22" viewBox="0 0 22 22"><path d="M8.5 11.6 L8.5 5.1 A2.95 2.95 0 0 1 14.4 5.1 L14.4 6.6" stroke="#e0282e" stroke-width="1.3" fill="none"/><path d="M5.6 12.8 Q6 17 11.45 17.1 Q16.5 17 16.9 12.4" stroke="#e0282e" stroke-width="1.2" fill="none" opacity="0.85"/><path d="M11.45 17.1 L11.45 19.6 M8.5 19.8 L14.4 19.8" stroke="#e0282e" stroke-width="1.3"/><path d="M2 20.5 L20.5 2" stroke="#e0282e" stroke-width="1.5"/></svg><svg class="a" style="left:357px;top:8px" width="24" height="22" viewBox="0 0 24 22"><path d="M13.6 4.2 L5 4.2 Q2.4 4.2 2.4 6.8 L2.4 13.2 Q2.4 15 4 15.4" stroke="#e0282e" stroke-width="1.4" fill="none"/><path d="M8.3 15.6 L13.7 15.6 Q15.2 15.6 15.2 14 L15.2 12 L20.6 15.6 L20.6 5.4 L15.6 9.6" stroke="#e0282e" stroke-width="1.4" fill="none" stroke-linejoin="round"/><path d="M2 20 L22.4 0.3" stroke="#e0282e" stroke-width="1.5"/></svg></div>
<div class="row" style="top:684.3px"><div class="av" style="background:linear-gradient(180deg,#c09060,#e0c8a8)"><div class="a" style="left:4px;top:10px;width:26px;height:10px;border-radius:40%;background:#0a0a0a"></div><div class="a" style="left:8px;top:14px;width:18px;height:20px;border-radius:50%;background:radial-gradient(ellipse at 50% 45%,#f4f0ea,#c8b8a8)"></div></div><div class="nm">Крістіна Падалка</div><svg class="a" style="left:326.5px;top:6.5px" width="22" height="22" viewBox="0 0 22 22"><path d="M8.5 11.6 L8.5 5.1 A2.95 2.95 0 0 1 14.4 5.1 L14.4 6.6" stroke="#e0282e" stroke-width="1.3" fill="none"/><path d="M5.6 12.8 Q6 17 11.45 17.1 Q16.5 17 16.9 12.4" stroke="#e0282e" stroke-width="1.2" fill="none" opacity="0.85"/><path d="M11.45 17.1 L11.45 19.6 M8.5 19.8 L14.4 19.8" stroke="#e0282e" stroke-width="1.3"/><path d="M2 20.5 L20.5 2" stroke="#e0282e" stroke-width="1.5"/></svg><svg class="a" style="left:357px;top:8px" width="24" height="22" viewBox="0 0 24 22"><path d="M13.6 4.2 L5 4.2 Q2.4 4.2 2.4 6.8 L2.4 13.2 Q2.4 15 4 15.4" stroke="#e0282e" stroke-width="1.4" fill="none"/><path d="M8.3 15.6 L13.7 15.6 Q15.2 15.6 15.2 14 L15.2 12 L20.6 15.6 L20.6 5.4 L15.6 9.6" stroke="#e0282e" stroke-width="1.4" fill="none" stroke-linejoin="round"/><path d="M2 20 L22.4 0.3" stroke="#e0282e" stroke-width="1.5"/></svg></div>
<div class="row" style="top:735.3px"><div class="av" style="background:#2b7fc0;color:#fff;font-size:15px;line-height:34px;text-align:center;font-weight:bold">K</div><div class="nm">Кургуз</div><svg class="a" style="left:326.5px;top:6.5px" width="22" height="22" viewBox="0 0 22 22"><path d="M8.5 11.6 L8.5 5.1 A2.95 2.95 0 0 1 14.4 5.1 L14.4 6.6" stroke="#e0282e" stroke-width="1.3" fill="none"/><path d="M5.6 12.8 Q6 17 11.45 17.1 Q16.5 17 16.9 12.4" stroke="#e0282e" stroke-width="1.2" fill="none" opacity="0.85"/><path d="M11.45 17.1 L11.45 19.6 M8.5 19.8 L14.4 19.8" stroke="#e0282e" stroke-width="1.3"/><path d="M2 20.5 L20.5 2" stroke="#e0282e" stroke-width="1.5"/></svg><svg class="a" style="left:357px;top:8px" width="24" height="22" viewBox="0 0 24 22"><path d="M13.6 4.2 L5 4.2 Q2.4 4.2 2.4 6.8 L2.4 13.2 Q2.4 15 4 15.4" stroke="#e0282e" stroke-width="1.4" fill="none"/><path d="M8.3 15.6 L13.7 15.6 Q15.2 15.6 15.2 14 L15.2 12 L20.6 15.6 L20.6 5.4 L15.6 9.6" stroke="#e0282e" stroke-width="1.4" fill="none" stroke-linejoin="round"/><path d="M2 20 L22.4 0.3" stroke="#e0282e" stroke-width="1.5"/></svg></div>
<div class="row" style="top:786.3px"><div class="av" style="background:linear-gradient(90deg,#d0b090,#c09070 60%,#e0c040 70%,#3070c0 80%,#90a060)"><div class="a" style="left:10px;top:6px;width:12px;height:14px;border-radius:50%;background:radial-gradient(ellipse at 50% 45%,#d0a090,#302020)"></div><div class="a" style="left:4px;top:18px;width:24px;height:18px;border-radius:14px 14px 0 0;background:#151515"></div><div class="a" style="left:10px;top:19px;width:12px;height:5px;border-radius:40%;background:#a0d0c8"></div></div><div class="nm">Олена Кириленко</div><svg class="a" style="left:326.5px;top:6.5px" width="22" height="22" viewBox="0 0 22 22"><path d="M8.5 11.6 L8.5 5.1 A2.95 2.95 0 0 1 14.4 5.1 L14.4 6.6" stroke="#e0282e" stroke-width="1.3" fill="none"/><path d="M5.6 12.8 Q6 17 11.45 17.1 Q16.5 17 16.9 12.4" stroke="#e0282e" stroke-width="1.2" fill="none" opacity="0.85"/><path d="M11.45 17.1 L11.45 19.6 M8.5 19.8 L14.4 19.8" stroke="#e0282e" stroke-width="1.3"/><path d="M2 20.5 L20.5 2" stroke="#e0282e" stroke-width="1.5"/></svg><svg class="a" style="left:357px;top:8px" width="24" height="22" viewBox="0 0 24 22"><path d="M13.6 4.2 L5 4.2 Q2.4 4.2 2.4 6.8 L2.4 13.2 Q2.4 15 4 15.4" stroke="#e0282e" stroke-width="1.4" fill="none"/><path d="M8.3 15.6 L13.7 15.6 Q15.2 15.6 15.2 14 L15.2 12 L20.6 15.6 L20.6 5.4 L15.6 9.6" stroke="#e0282e" stroke-width="1.4" fill="none" stroke-linejoin="round"/><path d="M2 20 L22.4 0.3" stroke="#e0282e" stroke-width="1.5"/></svg></div>
<div class="row" style="top:837.3px"><div class="av" style="background:#f07010;color:#fff;font-size:20px;line-height:34px;text-align:center;font-weight:normal">P</div><div class="nm">Роман Зайченко</div><svg class="a" style="left:326.5px;top:6.5px" width="22" height="22" viewBox="0 0 22 22"><path d="M8.5 11.6 L8.5 5.1 A2.95 2.95 0 0 1 14.4 5.1 L14.4 6.6" stroke="#e0282e" stroke-width="1.3" fill="none"/><path d="M5.6 12.8 Q6 17 11.45 17.1 Q16.5 17 16.9 12.4" stroke="#e0282e" stroke-width="1.2" fill="none" opacity="0.85"/><path d="M11.45 17.1 L11.45 19.6 M8.5 19.8 L14.4 19.8" stroke="#e0282e" stroke-width="1.3"/><path d="M2 20.5 L20.5 2" stroke="#e0282e" stroke-width="1.5"/></svg><svg class="a" style="left:357px;top:8px" width="24" height="22" viewBox="0 0 24 22"><rect x="2.3" y="4.1" width="14.5" height="11.5" rx="3" stroke="#666878" stroke-width="1.4" fill="none"/><path d="M16.8 8.5 L20.9 5.6 L20.9 14.3 L16.8 11.4" stroke="#666878" stroke-width="1.4" fill="none" stroke-linejoin="round"/></svg></div>
<div class="a" style="left:32px;top:888px;width:34px;height:2px;border-radius:9px 9px 0 0;background:#2b7fc0"></div>
  </div></div>
  <div class="a" style="left:428px;top:116px;width:10px;height:774px;border-radius:5px;background:#f0f0f4"></div>
  <div class="a" style="left:428px;top:116px;width:10px;height:709px;border-radius:5px;background:#a9aab4"></div>
  <div class="btn" style="left:49px;width:77px">Zaproś</div>
  <div class="btn" style="left:170px;width:155px">Wycisz wszystkich</div>
  <div class="btn" style="left:369px;width:29px;line-height:20px;font-weight:bold">···</div>
</div>
<div id="task" class="a">
  <div class="a" style="left:0;top:0;width:1919px;height:1px;background:#1a1a1e"></div>
  <svg class="a" style="left:18px;top:12px" width="26" height="26" viewBox="18 1042 26 26"><path d="M20 1046.8 L28.2 1045.7 L28.2 1053.9 L20 1053.9 Z M29.2 1045.6 L40.2 1044.8 L40.2 1053.9 L29.2 1053.9 Z M20 1055 L28.2 1055 L28.2 1063.4 L20 1062.5 Z M29.2 1055 L40.2 1055 L40.2 1065 L29.2 1063.5 Z" fill="#fff"/></svg>
  <!-- utorrent -->
  <div class="a" style="left:77px;top:10px;width:30px;height:30px;border-radius:50%;background:radial-gradient(circle at 45% 35%,#8cd050,#5aa830 70%,#4a9024)"></div>
  <svg class="a" style="left:77px;top:10px" width="30" height="30" viewBox="0 0 30 30"><path d="M5.5 10 L11 9 L13 21 Q16 22 19 19 L22.5 7 L28 8 L24 22 Q20 27 13.5 25 L14 29 L9.5 29 Z" fill="#fff"/></svg>
  <div class="t" style="left:111.5px;top:18.3px;font-size:15px;color:#fff;letter-spacing:-0.25px">µTorrent 3.6&nbsp; (build ...</div>
  <div class="ul" style="left:69px;width:190px;top:47px;height:2px"></div>
  <!-- record -->
  <svg class="a" style="left:280px;top:10px" width="30" height="30" viewBox="0 0 30 30"><circle cx="14.7" cy="14.5" r="13.5" fill="#fff"/><circle cx="14.7" cy="14.5" r="12.2" fill="#000"/><circle cx="14.7" cy="14.5" r="7.6" fill="#e82424"/></svg>
  <!-- telegram -->
  <svg class="a" style="left:342px;top:10px" width="30" height="30" viewBox="0 0 30 30"><defs><linearGradient id="tg" x1="0" y1="0" x2="0" y2="1"><stop offset="0" stop-color="#2eaae6"/><stop offset="1" stop-color="#1b88c6"/></linearGradient></defs><circle cx="14.7" cy="14.5" r="13.5" fill="url(#tg)"/><path d="M6 13.8 L21 8 L18.5 21 L13.3 17.2 L19 10.8 L11.5 15.6 Z" fill="#fff"/></svg>
  <!-- viber -->
  <svg class="a" style="left:403px;top:9px" width="32" height="32" viewBox="0 0 32 32"><path d="M4 6 Q4 2 9 1.6 L23 1.6 Q29 2 29 8 L29 18 Q29 24 23 24 L14 24 L9 29.5 L9 24 Q4 23 4 18 Z" fill="#7360f2" stroke="#fff" stroke-width="1.6"/><path d="M10 7 Q9 8 10 11 Q13 18 19 20 Q21.5 20.5 22.5 19 L21.8 17.2 L19 16.2 L17.8 17.4 Q14 16 12.6 12 L13.8 10.8 L12.8 8 Z" fill="#fff"/><path d="M17 6 Q22 6.5 23 11.5 M17 8.3 Q20.5 8.8 21 11.8" stroke="#fff" stroke-width="1" fill="none"/></svg>
  <!-- zoom workplace -->
  <div class="a" style="left:464px;top:10px;width:30px;height:30px;border-radius:12px;background:linear-gradient(180deg,#2478f8,#0b5cf0);color:#fff;font-size:8.5px;font-weight:bold;line-height:30px;text-align:center;letter-spacing:-0.3px">zoom</div>
  <div class="t" style="left:498px;top:18.3px;font-size:15px;color:#fff">Zoom Workplace</div>
  <div class="ul" style="left:456px;width:190px;top:47px;height:2px"></div>
  <!-- zoom spotkanie active -->
  <div class="a" style="left:651px;top:1px;width:200px;height:48px;background:#5f585d"></div>
  <div class="a" style="left:664px;top:10px;width:30px;height:30px;border-radius:12px;background:linear-gradient(180deg,#2478f8,#0b5cf0);color:#fff;font-size:8.5px;font-weight:bold;line-height:30px;text-align:center;letter-spacing:-0.3px">zoom</div>
  <div class="t" style="left:698px;top:18.3px;font-size:15px;color:#fff">Zoom Spotkanie</div>
  <div class="ul" style="left:651px;width:200px;top:47px;height:2px"></div>
  <!-- magnifier app -->
  <div class="a" style="left:867px;top:10px;width:30px;height:30px;background:#5ec0ee;border:1px solid #e8f4fc"></div>
  <svg class="a" style="left:867px;top:10px" width="30" height="30" viewBox="0 0 30 30"><text x="2" y="12" font-family="Liberation Sans" font-size="12" fill="#bfe6fa">A</text><circle cx="15" cy="15.5" r="7.5" stroke="#fff" stroke-width="1.8" fill="none"/><path d="M20.5 21 L27 27" stroke="#fff" stroke-width="2"/></svg>
  <!-- chrome -->
  <svg class="a" style="left:926px;top:10px" width="36" height="34" viewBox="0 0 36 34"><circle cx="15.5" cy="15" r="14.5" fill="#dd4a3a"/><path d="M15.5 15 L28 7.8 A14.5 14.5 0 0 1 17 29.4 Z" fill="#f5c02a"/><path d="M15.5 15 L17 29.4 A14.5 14.5 0 0 1 2.9 7.8 Z" fill="#2ba14e"/><circle cx="15.5" cy="15" r="6.5" fill="#fff"/><circle cx="15.5" cy="15" r="5" fill="#3d7fea"/><circle cx="23" cy="21.5" r="9.5" fill="#c8b0a0"/><circle cx="23" cy="19" r="4.5" fill="#e8d0c0"/><path d="M16 27 Q23 22 30 27 L28 31 L18 31 Z" fill="#c04050"/></svg>
  <div class="t" style="left:961px;top:18.3px;font-size:14.7px;color:#fff">Участник публика...</div>
  <div class="ul" style="left:919px;width:190px;top:47px;height:2px"></div>
  <!-- explorer -->
  <svg class="a" style="left:1129px;top:11px" width="32" height="28" viewBox="0 0 32 28"><path d="M2 3 Q2 2 3 2 L11 2 L13 4 L29 4 L29 7 L2 7 Z" fill="#e0a820"/><rect x="2" y="6" width="27.5" height="18.8" fill="#f8d04a"/><path d="M7 25 L7 17 L25 17 L25 25 L21.5 25 L21.5 20.5 L10.5 20.5 L10.5 25 Z" fill="#2a8ad8"/></svg>
  <!-- tray -->
  <svg class="a" style="left:1575px;top:12px" width="150" height="26" viewBox="1575 1042 150 26">
    <path d="M1580 1058.7 L1587.9 1050.8 L1595.8 1058.7" stroke="#fff" stroke-width="1.2" fill="none"/>
    <rect x="1613" y="1045" width="9" height="12.5" rx="2.5" fill="#fff"/>
    <path d="M1611.4 1055.2 Q1611.4 1061 1617.5 1061 Q1623.6 1061 1623.6 1055.2" stroke="#fff" stroke-width="1.1" fill="none"/>
    <path d="M1617.5 1061 L1617.5 1064.4 M1614 1064.6 L1621 1064.6" stroke="#fff" stroke-width="1.1"/>
    <rect x="1642.3" y="1050.4" width="14.7" height="10" stroke="#fff" stroke-width="1.1" fill="none"/>
    <rect x="1643.8" y="1051.9" width="11.8" height="7" fill="#fff"/>
    <rect x="1657.2" y="1053.2" width="1.2" height="4.5" fill="#fff"/>
    <path d="M1638.6 1049 L1638.6 1047 M1641.4 1049 L1641.4 1047 M1637.8 1049 L1642.2 1049 L1642.2 1051.2 Q1640 1054 1637.8 1051.2 Z M1640 1053 L1640 1061" stroke="#fff" stroke-width="1" fill="none"/>
    <path d="M1671.2 1063 A14.5 14.5 0 0 1 1685.8 1048.3" stroke="#fff" stroke-width="1.1" fill="none"/>
    <path d="M1675 1063 A10.7 10.7 0 0 1 1685.8 1052.2" stroke="#fff" stroke-width="1.1" fill="none"/>
    <path d="M1678.8 1063 A6.9 6.9 0 0 1 1685.8 1056" stroke="#fff" stroke-width="1.1" fill="none"/>
    <circle cx="1684.6" cy="1061.6" r="1.3" fill="#fff"/>
    <path d="M1698.4 1051.8 L1701.5 1051.8 L1704.7 1048.4 L1704.7 1061.6 L1701.5 1058.4 L1698.4 1058.4 Z" stroke="#fff" stroke-width="1.1" fill="none"/>
    <path d="M1708 1052.5 Q1710 1055 1708 1057.6" stroke="#fff" stroke-width="1.1" fill="none"/>
    <path d="M1711 1050 Q1714.5 1055 1711 1060" stroke="#fff" stroke-width="1.1" fill="none"/>
    <path d="M1714.3 1046.6 Q1719.8 1055 1714.3 1063.8" stroke="#fff" stroke-width="1.1" fill="none"/>
  </svg>
  <div class="t" style="left:1732.5px;top:20px;font-size:13.5px;color:#fff;letter-spacing:-0.5px">РУС</div>
  <div class="t" style="left:1794.5px;top:8.8px;font-size:13.2px;color:#fff;letter-spacing:-0.2px">12:22</div>
  <div class="t" style="left:1776.5px;top:31.5px;font-size:13.7px;color:#fff;letter-spacing:-0.1px">24.12.2025</div>
  <svg class="a" style="left:1866px;top:12px" width="36" height="36" viewBox="1866 1042 36 36">
    <path d="M1869 1045.2 L1888.8 1045.2 L1888.8 1062 L1875 1062 L1871.5 1065.5 L1871.5 1062 L1869 1062 Z" fill="#fff"/>
    <path d="M1872.5 1049.5 L1885.3 1049.5 M1872.5 1053.3 L1885.3 1053.3 M1872.5 1057 L1883 1057" stroke="#2a2726" stroke-width="1.1"/>
    <circle cx="1888.3" cy="1064.4" r="10" fill="#2b2b2b" stroke="#6e6e6e" stroke-width="1"/>
    <text x="1884.3" y="1069.3" font-family="Liberation Sans" font-weight="bold" font-size="13" fill="#fff">3</text>
  </svg>
  <div class="a" style="left:1914px;top:1px;width:1px;height:48px;background:#5a5858"></div>
</div>

</body></html>
